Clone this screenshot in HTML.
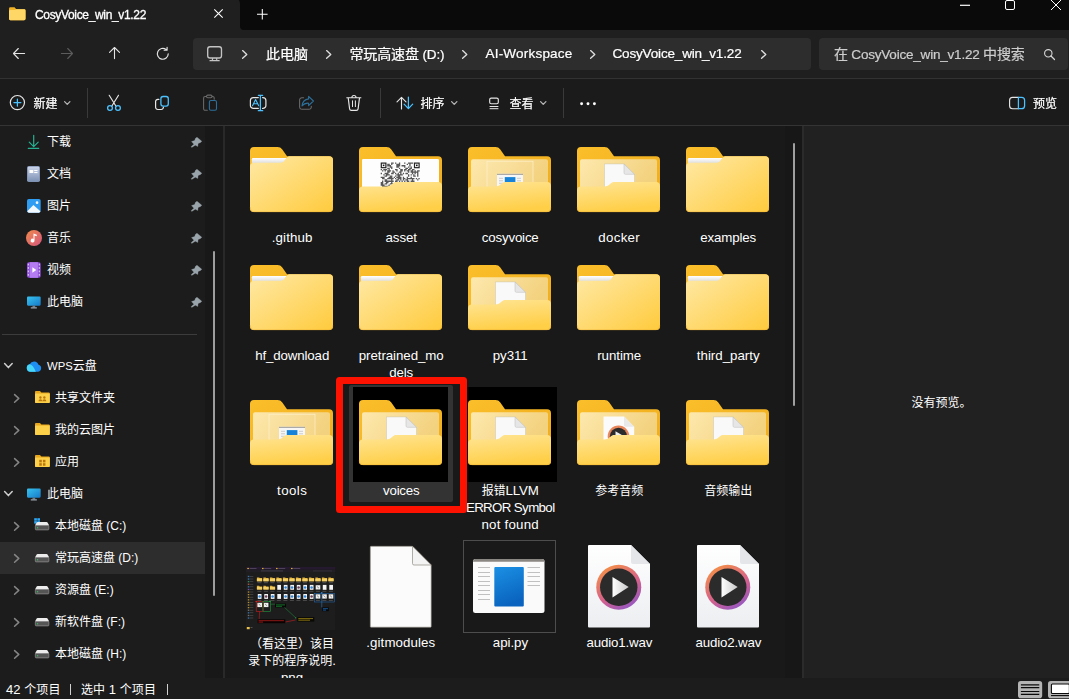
<!DOCTYPE html><html lang="zh-CN"><head><meta charset="utf-8"><title>CosyVoice_win_v1.22</title><style>
*{box-sizing:border-box;margin:0;padding:0}
html,body{width:1069px;height:699px;overflow:hidden;background:#191919;}
body{position:relative;font-family:"Liberation Sans","Noto Sans CJK SC",sans-serif;color:#fff;font-size:12px;}
.abs{position:absolute}
.t{position:absolute;white-space:nowrap;line-height:16px;height:16px;color:#fff}
.t span,.lbl span{white-space:nowrap}
svg{position:absolute;overflow:visible}
.lbl{position:absolute;width:120px;text-align:center;line-height:17px;color:#fff;white-space:nowrap}
</style></head><body>
<div class="abs" style="left:0px;top:0px;width:1069px;height:29.5px;background:#0a0a0a;"></div>
<div class="abs" style="left:0px;top:-4px;width:239.7px;height:34px;background:#1f1f1f;border-radius:0 8px 0 0"></div>
<svg style="left:239.700px;top:25.500px" width="4" height="4" viewBox="0 0 4 4"><path d="M0 0V4H4A4 4 0 0 1 0 0Z" fill="#1f1f1f"/></svg>
<div class="abs" style="left:0px;top:29.5px;width:1069px;height:48.5px;background:#1f1f1f;"></div>
<div class="abs" style="left:0px;top:77.8px;width:1069px;height:1.4px;background:#323232;"></div>
<div class="abs" style="left:0px;top:79.2px;width:1069px;height:46px;background:#1b1b1b;"></div>
<div class="abs" style="left:0px;top:125px;width:1069px;height:1px;background:#323232;"></div>
<div class="abs" style="left:0px;top:124.5px;width:1069px;height:2px;background:rgba(60,60,60,0.25);"></div>
<div class="abs" style="left:0px;top:126px;width:205px;height:552px;background:#1c1c1c;"></div>
<div class="abs" style="left:205px;top:126px;width:18px;height:552px;background:#181818;"></div>
<div class="abs" style="left:223.3px;top:126px;width:1.5px;height:552px;background:#292929;"></div>
<div class="abs" style="left:225px;top:126px;width:560px;height:552px;background:#191919;"></div>
<div class="abs" style="left:785px;top:126px;width:17.5px;height:552px;background:#171717;"></div>
<div class="abs" style="left:803.5px;top:126px;width:266px;height:552px;background:#212121;"></div>
<div class="abs" style="left:802.4px;top:126px;width:1.5px;height:552px;background:#2b2b2b;"></div>
<div class="abs" style="left:0px;top:678px;width:1069px;height:21px;background:#1c1c1c;"></div>
<svg style="left:8.700px;top:6.700px" width="16.500" height="13.500" viewBox="0 0 18 14">
<path d="M1.500 0H6l2 2h8.500A1.500 1.500 0 0 1 18 3.500V12.500A1.500 1.500 0 0 1 16.500 14H1.500A1.500 1.500 0 0 1 0 12.500V1.500A1.500 1.500 0 0 1 1.500 0Z" fill="#F2B225"/>
<path d="M0 4.200A1.200 1.200 0 0 1 1.200 3H6.500L8 2H16.500A1.500 1.500 0 0 1 18 3.500V12.500A1.500 1.500 0 0 1 16.500 14H1.500A1.500 1.500 0 0 1 0 12.500Z" fill="#FFD766"/>
</svg>
<svg style="left:214px;top:8.9px" width="9" height="9" viewBox="0 0 9 9"><path d="M0.300 0.300L8.700 8.700M8.700 0.300L0.300 8.700" stroke="#fff" stroke-width="1.1" fill="none"/></svg>
<svg style="left:257.2px;top:9.2px" width="10.600" height="10.600" viewBox="0 0 10.600 10.600"><path d="M5.300 0V10.600M0 5.300H10.600" stroke="#fff" stroke-width="1.050" fill="none"/></svg>
<svg style="left:960px;top:0px" width="10" height="10" viewBox="0 0 10 10"><path d="M0 5.300H10" stroke="#fff" stroke-width="1.2"/></svg>
<svg style="left:1005px;top:-0.500px" width="10" height="10" viewBox="0 0 10 10"><rect x="0.500" y="0.500" width="9" height="9" rx="1.500" stroke="#fff" stroke-width="1" fill="none"/></svg>
<svg style="left:1051px;top:0px" width="10" height="10" viewBox="0 0 10 10"><path d="M0 0L10 10M10 0L0 10" stroke="#fff" stroke-width="1" fill="none"/></svg>
<svg style="left:13px;top:48.0px" width="12" height="11" viewBox="0 0 12 11"><path d="M5.300 0.500L0.500 5.500L5.300 10.500M0.700 5.500H11.600" stroke="#e4e4e4" stroke-width="1.1" fill="none" stroke-linecap="round" stroke-linejoin="round"/></svg>
<svg style="left:61px;top:48.0px" width="12" height="11" viewBox="0 0 12 11"><path d="M6.700 0.500L11.500 5.500L6.700 10.500M11.300 5.500H0.400" stroke="#5c5c5c" stroke-width="1.1" fill="none" stroke-linecap="round" stroke-linejoin="round"/></svg>
<svg style="left:109.0px;top:47.4px" width="11" height="12" viewBox="0 0 11 12"><path d="M0.500 5.300L5.500 0.500L10.500 5.300M5.500 0.700V11.600" stroke="#e4e4e4" stroke-width="1.1" fill="none" stroke-linecap="round" stroke-linejoin="round"/></svg>
<svg style="left:156.2px;top:46.6px" width="13.600" height="13.600" viewBox="0 0 13 13"><path d="M11.7 6.5A5.2 5.2 0 1 1 9.6 2.300M10.600 0.300V3.100H7.800" stroke="#e4e4e4" stroke-width="1.1" fill="none" stroke-linecap="round" stroke-linejoin="round"/></svg>
<div class="abs" style="left:193px;top:38px;width:618px;height:32px;background:#2d2d2d;border-radius:4px"></div>
<div class="abs" style="left:819px;top:38px;width:249px;height:32px;background:#2d2d2d;border-radius:4px"></div>
<svg style="left:206.700px;top:45.600px" width="15.200" height="15.400" viewBox="0 0 15.200 15.400"><rect x="0.700" y="0.700" width="13.800" height="11.300" rx="2.300" stroke="#c4c4c4" stroke-width="1.350" fill="none"/><path d="M5.700 12.500L5.300 14.300M9.500 12.500L9.900 14.300M3 14.700H12.200" stroke="#c4c4c4" stroke-width="1.200" fill="none" stroke-linecap="round"/></svg>
<svg style="left:241.60000000000002px;top:49.7px" width="5.4" height="8.8" viewBox="0 0 5.4 8.8"><path d="M0.600 0.600L4.800000000000001 4.4L0.6 8.200000000000001" stroke="#dedede" stroke-width="1.35" fill="none" stroke-linecap="round" stroke-linejoin="round"/></svg>
<svg style="left:325.6px;top:49.7px" width="5.4" height="8.8" viewBox="0 0 5.4 8.8"><path d="M0.600 0.600L4.800000000000001 4.4L0.6 8.200000000000001" stroke="#dedede" stroke-width="1.35" fill="none" stroke-linecap="round" stroke-linejoin="round"/></svg>
<svg style="left:462.40000000000003px;top:49.7px" width="5.4" height="8.8" viewBox="0 0 5.4 8.8"><path d="M0.600 0.600L4.800000000000001 4.4L0.6 8.200000000000001" stroke="#dedede" stroke-width="1.35" fill="none" stroke-linecap="round" stroke-linejoin="round"/></svg>
<svg style="left:589.9px;top:49.7px" width="5.4" height="8.8" viewBox="0 0 5.4 8.8"><path d="M0.600 0.600L4.800000000000001 4.4L0.6 8.200000000000001" stroke="#dedede" stroke-width="1.35" fill="none" stroke-linecap="round" stroke-linejoin="round"/></svg>
<svg style="left:760.5999999999999px;top:49.7px" width="5.4" height="8.8" viewBox="0 0 5.4 8.8"><path d="M0.600 0.600L4.800000000000001 4.4L0.6 8.200000000000001" stroke="#dedede" stroke-width="1.35" fill="none" stroke-linecap="round" stroke-linejoin="round"/></svg>
<svg style="left:1043.500px;top:48.500px" width="11" height="11" viewBox="0 0 11 11"><circle cx="4.300" cy="4.300" r="3.700" stroke="#d8d8d8" stroke-width="1.1" fill="none"/><path d="M7 7L10.500 10.500" stroke="#d8d8d8" stroke-width="1.200" stroke-linecap="round"/></svg>
<svg style="left:0;top:0" width="1069" height="699" viewBox="0 0 1069 699" fill="none" stroke-linecap="round" stroke-linejoin="round"><circle cx="17.4" cy="102.6" r="7.1" stroke="#e6e6e6" stroke-width="1.2"/><path d="M17.4 99.1V106.1M13.9 102.6H20.9" stroke="#4cc2ff" stroke-width="1.25"/><path d="M109.2 95.3L116 106.2M118.5 95.3L111.7 106.2" stroke="#e6e6e6" stroke-width="1.15"/><circle cx="110" cy="108.05" r="2.4" stroke="#4cc2ff" stroke-width="1.3"/><circle cx="117.95" cy="108.05" r="2.4" stroke="#4cc2ff" stroke-width="1.3"/><path d="M158.9 99.4H157.8A2.2 2.2 0 0 0 155.6 101.6V107.3A2.2 2.2 0 0 0 157.8 109.5H161.2A2.2 2.2 0 0 0 163.4 107.3V107" stroke="#e6e6e6" stroke-width="1.2"/><rect x="160.9" y="96.5" width="7.4" height="9.55" rx="2.2" stroke="#4cc2ff" stroke-width="1.3"/><path d="M206.5 96.5H205.1A1.5 1.5 0 0 0 203.6 98V108.8A1.5 1.5 0 0 0 205.1 110.3H207.3M212.1 96.5H212.7A1.5 1.5 0 0 1 214.2 98V99.3" stroke="#6a6a6a" stroke-width="1.05"/><rect x="206.5" y="95.1" width="5.6" height="2.6" rx="1.3" stroke="#6a6a6a" stroke-width="1.05"/><rect x="209.4" y="100.5" width="7.1" height="9.8" rx="1.5" stroke="#2d6f99" stroke-width="1.1"/><path d="M258.3 97.6H253.4A3 3 0 0 0 250.4 100.6V105.4A3 3 0 0 0 253.4 108.4H258.3M262.6 97.6H262.9A3 3 0 0 1 265.9 100.6V105.4A3 3 0 0 1 262.9 108.4H262.6" stroke="#e6e6e6" stroke-width="1.2"/><path d="M258.3 95.3H262.7M258.3 110.7H262.7M260.4 95.3V110.7" stroke="#4cc2ff" stroke-width="1.25"/><path d="M252.5 105.8L255.6 99.5L258.7 105.8M253.5 103.8H257.7" stroke="#4cc2ff" stroke-width="1.1"/><path d="M303.6 97.7H301.9A2.3 2.3 0 0 0 299.6 100V106.9A2.3 2.3 0 0 0 301.9 109.2H309A2.3 2.3 0 0 0 311.3 106.9V106.2" stroke="#6a6a6a" stroke-width="1.05"/><path d="M308.6 96.3L313.4 101L308.6 105.6V103.2C305.8 103 303.6 104 302 106C302.4 102.2 304.8 99.3 308.6 98.9Z" stroke="#2d6f99" stroke-width="1.1"/><path d="M346.8 97.7H360.9M351.9 97.5A2.05 2.05 0 0 1 356 97.5M348.2 97.9L349.6 108.9A1.7 1.7 0 0 0 351.3 110.4H356.4A1.7 1.7 0 0 0 358.1 108.9L359.5 97.9" stroke="#e6e6e6" stroke-width="1.15"/><path d="M352.5 100.8V106.6M355.4 100.8V106.6" stroke="#e6e6e6" stroke-width="1"/><path d="M397 101.8L401.5 97.4L406 101.8M401.5 97.6V109" stroke="#e6e6e6" stroke-width="1.15"/><path d="M404.1 104.1L408.4 108.6L412.7 104.1M408.4 108.4V97" stroke="#4cc2ff" stroke-width="1.25"/><rect x="489.7" y="98.1" width="8.6" height="5.7" rx="1.5" stroke="#e6e6e6" stroke-width="1.15"/><path d="M490 106.5H498M490 108.7H498" stroke="#e6e6e6" stroke-width="1"/><circle cx="581.6" cy="103.8" r="1.45" fill="#fff"/><circle cx="588" cy="103.8" r="1.45" fill="#fff"/><circle cx="594.4" cy="103.8" r="1.45" fill="#fff"/><path d="M1018.4 97.3H1012.6A3 3 0 0 0 1009.6 100.3V105.7A3 3 0 0 0 1012.6 108.7H1018.4" stroke="#e6e6e6" stroke-width="1.15"/><path d="M1018.4 97.3V108.7M1018.4 97.3H1021.6A3 3 0 0 1 1024.6 100.3V105.7A3 3 0 0 1 1021.6 108.7H1018.4" stroke="#4cc2ff" stroke-width="1.25"/></svg>
<svg style="left:63.75px;top:101.1px" width="6.5" height="4" viewBox="0 0 6.5 4"><path d="M0.600 0.600L3.25 3.4L5.9 0.6" stroke="#b4b4b4" stroke-width="1.3" fill="none" stroke-linecap="round" stroke-linejoin="round"/></svg>
<div class="abs" style="left:87px;top:88px;width:1px;height:30px;background:#3a3a3a;"></div>
<div class="abs" style="left:379.5px;top:88px;width:1px;height:30px;background:#3a3a3a;"></div>
<svg style="left:450.65px;top:101.1px" width="6.5" height="4" viewBox="0 0 6.5 4"><path d="M0.600 0.600L3.25 3.4L5.9 0.6" stroke="#b4b4b4" stroke-width="1.3" fill="none" stroke-linecap="round" stroke-linejoin="round"/></svg>
<svg style="left:539.95px;top:101.1px" width="6.5" height="4" viewBox="0 0 6.5 4"><path d="M0.600 0.600L3.25 3.4L5.9 0.6" stroke="#b4b4b4" stroke-width="1.3" fill="none" stroke-linecap="round" stroke-linejoin="round"/></svg>
<div class="abs" style="left:562.8px;top:88px;width:1px;height:30px;background:#3a3a3a;"></div>
<svg style="left:28.000000000000004px;top:135px" width="11" height="14" viewBox="0 0 11 14"><path d="M5.700 0.300V11.500M1.200 7.200L5.700 11.700L10.200 7.200M0.300 13.400H10.700" stroke="#25b191" stroke-width="1.200" fill="none" stroke-linecap="round" stroke-linejoin="round"/></svg>
<div id="t11" class="t" style="left:47px;top:134.0px;font-size:12px;color:#fff;letter-spacing:0px;"><span style="font-size:12px">下载</span></div>
<svg style="left:191.4px;top:136.8px" width="11" height="10.600" viewBox="0 0 11 10.600"><path d="M6 0.200L10.800 4.200L9.600 5.500L7.100 6.600L6.800 9.500L4.300 8.200L0.700 10.400L0.200 9.600L2.900 7.300L0.500 4.600L3.600 3.600L4.500 1.300Z" fill="#98a3aa" stroke="#98a3aa" stroke-width="0.300" stroke-linejoin="round"/></svg>
<svg style="left:27.200000000000003px;top:166px" width="13" height="16" viewBox="0 0 13 16"><defs><linearGradient id="dg" x1="0" y1="0" x2="0" y2="1"><stop offset="0" stop-color="#c9d3e8"/><stop offset="1" stop-color="#7f93b5"/></linearGradient></defs><rect x="0" y="0" width="13" height="16" rx="1.800" fill="#8092b3"/><rect x="0.800" y="0.800" width="11.400" height="14.400" rx="1" fill="url(#dg)"/><rect x="2.500" y="4" width="3.800" height="3" fill="#fff"/><rect x="7.200" y="4" width="3.300" height="1.100" fill="#fff"/><rect x="7.200" y="6" width="3.300" height="1.100" fill="#fff"/></svg>
<div id="t12" class="t" style="left:47px;top:166.0px;font-size:12px;color:#fff;letter-spacing:0px;"><span style="font-size:12px">文档</span></div>
<svg style="left:191.4px;top:168.8px" width="11" height="10.600" viewBox="0 0 11 10.600"><path d="M6 0.200L10.800 4.200L9.600 5.500L7.100 6.600L6.800 9.500L4.300 8.200L0.700 10.400L0.200 9.600L2.900 7.300L0.500 4.600L3.600 3.600L4.500 1.300Z" fill="#98a3aa" stroke="#98a3aa" stroke-width="0.300" stroke-linejoin="round"/></svg>
<svg style="left:26.900000000000002px;top:199px" width="13.700" height="13.700" viewBox="0 0 15 15"><rect width="15" height="15" rx="2" fill="#2f9df2"/><path d="M0.300 13.500L7 6.500L14.700 13.500A2 2 0 0 1 13 15H2A2 2 0 0 1 0.300 13.500Z" fill="#f3f9ff"/><circle cx="11" cy="4" r="1.500" fill="#f3f9ff"/></svg>
<div id="t13" class="t" style="left:47px;top:198.0px;font-size:12px;color:#fff;letter-spacing:0px;"><span style="font-size:12px">图片</span></div>
<svg style="left:191.4px;top:200.8px" width="11" height="10.600" viewBox="0 0 11 10.600"><path d="M6 0.200L10.800 4.200L9.600 5.500L7.100 6.600L6.800 9.500L4.300 8.200L0.700 10.400L0.200 9.600L2.900 7.300L0.500 4.600L3.600 3.600L4.500 1.300Z" fill="#98a3aa" stroke="#98a3aa" stroke-width="0.300" stroke-linejoin="round"/></svg>
<svg style="left:25.700000000000003px;top:230px" width="16" height="16" viewBox="0 0 16 16"><defs><linearGradient id="mg" x1="0" y1="0" x2="1" y2="1"><stop offset="0" stop-color="#f08a4b"/><stop offset="1" stop-color="#d4567e"/></linearGradient></defs><circle cx="8" cy="8" r="8" fill="url(#mg)"/><path d="M7.500 3.500L10.800 4.800V6.300L8.500 5.500V10.500A1.900 1.900 0 1 1 7.500 8.900Z" fill="#fff"/></svg>
<div id="t14" class="t" style="left:47px;top:230.0px;font-size:12px;color:#fff;letter-spacing:0px;"><span style="font-size:12px">音乐</span></div>
<svg style="left:191.4px;top:232.8px" width="11" height="10.600" viewBox="0 0 11 10.600"><path d="M6 0.200L10.800 4.200L9.600 5.500L7.100 6.600L6.800 9.500L4.300 8.200L0.700 10.400L0.200 9.600L2.900 7.300L0.500 4.600L3.600 3.600L4.500 1.300Z" fill="#98a3aa" stroke="#98a3aa" stroke-width="0.300" stroke-linejoin="round"/></svg>
<svg style="left:26.900000000000002px;top:262px" width="13.700" height="16" viewBox="0 0 14 16"><rect width="14" height="16" rx="1.800" fill="#8e4fd8"/><rect x="2.800" y="0" width="8.400" height="16" fill="#b47cf0"/><path d="M5.500 5.300L9.500 8L5.500 10.700Z" fill="#fff"/><g fill="#d9c2f7"><rect x="0.800" y="1.500" width="1.200" height="1.800"/><rect x="0.800" y="5" width="1.200" height="1.800"/><rect x="0.800" y="8.500" width="1.200" height="1.800"/><rect x="0.800" y="12" width="1.200" height="1.800"/><rect x="12" y="1.500" width="1.200" height="1.800"/><rect x="12" y="5" width="1.200" height="1.800"/><rect x="12" y="8.500" width="1.200" height="1.800"/><rect x="12" y="12" width="1.200" height="1.800"/></g></svg>
<div id="t15" class="t" style="left:47px;top:262.0px;font-size:12px;color:#fff;letter-spacing:0px;"><span style="font-size:12px">视频</span></div>
<svg style="left:191.4px;top:264.8px" width="11" height="10.600" viewBox="0 0 11 10.600"><path d="M6 0.200L10.800 4.200L9.600 5.500L7.100 6.600L6.800 9.500L4.300 8.200L0.700 10.400L0.200 9.600L2.900 7.300L0.500 4.600L3.600 3.600L4.500 1.300Z" fill="#98a3aa" stroke="#98a3aa" stroke-width="0.300" stroke-linejoin="round"/></svg>
<svg style="left:26.900000000000002px;top:295.5px" width="13.700" height="13" viewBox="0 0 15 13"><defs><linearGradient id="pcg1" x1="0" y1="0" x2="1" y2="1"><stop offset="0" stop-color="#37c3f0"/><stop offset="1" stop-color="#1679c9"/></linearGradient></defs><rect width="15" height="10" rx="1.200" fill="url(#pcg1)"/><rect x="6" y="10" width="3" height="2" fill="#6f7c86"/><rect x="4" y="11.800" width="7" height="1.200" rx="0.500" fill="#9aa4ac"/></svg>
<div id="t16" class="t" style="left:47px;top:294.0px;font-size:12px;color:#fff;letter-spacing:0px;"><span style="font-size:12px">此电脑</span></div>
<svg style="left:191.4px;top:296.8px" width="11" height="10.600" viewBox="0 0 11 10.600"><path d="M6 0.200L10.800 4.200L9.600 5.500L7.100 6.600L6.800 9.500L4.300 8.200L0.700 10.400L0.200 9.600L2.900 7.300L0.500 4.600L3.600 3.600L4.500 1.300Z" fill="#98a3aa" stroke="#98a3aa" stroke-width="0.300" stroke-linejoin="round"/></svg>
<div class="abs" style="left:2px;top:334px;width:195px;height:1px;background:#3c3c3c;"></div>
<svg style="left:4.199999999999999px;top:363.4px" width="8.8" height="5.2" viewBox="0 0 8.8 5.2"><path d="M0.600 0.600L4.4 4.6000000000000005L8.200000000000001 0.6" stroke="#cfcfcf" stroke-width="1.5" fill="none" stroke-linecap="round" stroke-linejoin="round"/></svg>
<svg style="left:26px;top:359.5px" width="16" height="12" viewBox="0 0 17 12"><path d="M4.500 12A4 4 0 0 1 4 4.100A5 5 0 0 1 13.300 4.600A3.800 3.800 0 0 1 13 12Z" fill="#1f8ef1"/><path d="M4.500 12A4 4 0 0 1 4 4.100C6.500 4.500 8 7 10.500 12Z" fill="#48d6f7"/></svg>
<div id="t17" class="t" style="left:47px;top:358.0px;font-size:11.3px;color:#fff;letter-spacing:0px;">WPS<span style="font-size:12px">云盘</span></div>
<svg style="left:13.900000000000002px;top:393.6px" width="5.4" height="8.8" viewBox="0 0 5.4 8.8"><path d="M0.600 0.600L4.800000000000001 4.4L0.6 8.200000000000001" stroke="#858585" stroke-width="1.5" fill="none" stroke-linecap="round" stroke-linejoin="round"/></svg>
<svg style="left:34.5px;top:391.2px" width="14.800" height="12" viewBox="0 0 15 12"><path d="M1 0H5L6.500 1.500H14A1 1 0 0 1 15 2.500V11A1 1 0 0 1 14 12H1A1 1 0 0 1 0 11V1A1 1 0 0 1 1 0Z" fill="#e9a71b"/><path d="M0 3.300A0.800 0.800 0 0 1 0.800 2.500H15V11A1 1 0 0 1 14 12H1A1 1 0 0 1 0 11Z" fill="#fdd04a"/><circle cx="5.500" cy="6.500" r="1.200" fill="#b9770e"/><circle cx="9.500" cy="6.500" r="1.200" fill="#b9770e"/><path d="M3.500 10.200A2 2 0 0 1 7.500 10.200ZM7.500 10.200A2 2 0 0 1 11.500 10.200Z" fill="#b9770e"/></svg>
<div id="t18" class="t" style="left:55px;top:390.0px;font-size:12px;color:#fff;letter-spacing:0px;"><span style="font-size:12px">共享文件夹</span></div>
<svg style="left:13.900000000000002px;top:425.6px" width="5.4" height="8.8" viewBox="0 0 5.4 8.8"><path d="M0.600 0.600L4.800000000000001 4.4L0.6 8.200000000000001" stroke="#858585" stroke-width="1.5" fill="none" stroke-linecap="round" stroke-linejoin="round"/></svg>
<svg style="left:34.5px;top:423.2px" width="14.800" height="12" viewBox="0 0 15 12"><path d="M1 0H5L6.500 1.500H14A1 1 0 0 1 15 2.500V11A1 1 0 0 1 14 12H1A1 1 0 0 1 0 11V1A1 1 0 0 1 1 0Z" fill="#e9a71b"/><path d="M0 3.300A0.800 0.800 0 0 1 0.800 2.500H15V11A1 1 0 0 1 14 12H1A1 1 0 0 1 0 11Z" fill="#fdd04a"/></svg>
<div id="t19" class="t" style="left:55px;top:422.0px;font-size:12px;color:#fff;letter-spacing:0px;"><span style="font-size:12px">我的云图片</span></div>
<svg style="left:13.900000000000002px;top:457.6px" width="5.4" height="8.8" viewBox="0 0 5.4 8.8"><path d="M0.600 0.600L4.800000000000001 4.4L0.6 8.200000000000001" stroke="#858585" stroke-width="1.5" fill="none" stroke-linecap="round" stroke-linejoin="round"/></svg>
<svg style="left:34.5px;top:455.2px" width="14.800" height="12" viewBox="0 0 15 12"><path d="M1 0H5L6.500 1.500H14A1 1 0 0 1 15 2.500V11A1 1 0 0 1 14 12H1A1 1 0 0 1 0 11V1A1 1 0 0 1 1 0Z" fill="#e9a71b"/><path d="M0 3.300A0.800 0.800 0 0 1 0.800 2.500H15V11A1 1 0 0 1 14 12H1A1 1 0 0 1 0 11Z" fill="#fdd04a"/><g fill="#b9770e"><rect x="4.300" y="4.800" width="2.600" height="2.600"/><rect x="8" y="4.800" width="2.600" height="2.600"/><rect x="4.300" y="8.200" width="2.600" height="2.600"/><rect x="8" y="8.200" width="2.600" height="2.600"/></g></svg>
<div id="t20" class="t" style="left:55px;top:454.0px;font-size:12px;color:#fff;letter-spacing:0px;"><span style="font-size:12px">应用</span></div>
<svg style="left:4.199999999999999px;top:491.4px" width="8.8" height="5.2" viewBox="0 0 8.8 5.2"><path d="M0.600 0.600L4.4 4.6000000000000005L8.200000000000001 0.6" stroke="#cfcfcf" stroke-width="1.5" fill="none" stroke-linecap="round" stroke-linejoin="round"/></svg>
<svg style="left:26.900000000000002px;top:487.5px" width="13.700" height="13" viewBox="0 0 15 13"><defs><linearGradient id="pcg2" x1="0" y1="0" x2="1" y2="1"><stop offset="0" stop-color="#37c3f0"/><stop offset="1" stop-color="#1679c9"/></linearGradient></defs><rect width="15" height="10" rx="1.200" fill="url(#pcg2)"/><rect x="6" y="10" width="3" height="2" fill="#6f7c86"/><rect x="4" y="11.800" width="7" height="1.200" rx="0.500" fill="#9aa4ac"/></svg>
<div id="t21" class="t" style="left:47px;top:486.0px;font-size:12px;color:#fff;letter-spacing:0px;"><span style="font-size:12px">此电脑</span></div>
<div class="abs" style="left:0px;top:542px;width:204.5px;height:32px;background:#2d2d2d;"></div>
<svg style="left:13.900000000000002px;top:521.6px" width="5.4" height="8.8" viewBox="0 0 5.4 8.8"><path d="M0.600 0.600L4.800000000000001 4.4L0.6 8.200000000000001" stroke="#858585" stroke-width="1.5" fill="none" stroke-linecap="round" stroke-linejoin="round"/></svg>
<svg style="left:34.9px;top:518px" width="14.200" height="12.500" viewBox="0 0 14.200 12.500"><g fill="#2aa7f5"><rect x="-0.800" y="0.200" width="2.700" height="2.500"/><rect x="2.300" y="0.200" width="2.700" height="2.500"/><rect x="-0.800" y="3.100" width="2.700" height="2.500"/><rect x="2.300" y="3.100" width="2.700" height="2.500"/></g><path d="M2.600 4H11.600Q12.300 4 12.700 4.700L14.200 7.600H0L1.500 4.700Q1.900 4 2.600 4Z" fill="#ececec"/><rect x="0.300" y="7.500" width="13.600" height="4.400" rx="0.800" fill="#555" stroke="#a0a0a0" stroke-width="0.600"/><rect x="1.900" y="9.300" width="1.300" height="1" fill="#35d06a"/></svg>
<div id="t22" class="t" style="left:55px;top:518.0px;font-size:12px;color:#fff;letter-spacing:0px;"><span style="font-size:12px">本地磁盘</span> (C:)</div>
<svg style="left:13.900000000000002px;top:553.6px" width="5.4" height="8.8" viewBox="0 0 5.4 8.8"><path d="M0.600 0.600L4.800000000000001 4.4L0.6 8.200000000000001" stroke="#858585" stroke-width="1.5" fill="none" stroke-linecap="round" stroke-linejoin="round"/></svg>
<svg style="left:34.9px;top:550px" width="14.200" height="12.500" viewBox="0 0 14.200 12.500"><path d="M2.600 4H11.600Q12.300 4 12.700 4.700L14.200 7.600H0L1.500 4.700Q1.900 4 2.600 4Z" fill="#ececec"/><rect x="0.300" y="7.500" width="13.600" height="4.400" rx="0.800" fill="#555" stroke="#a0a0a0" stroke-width="0.600"/><rect x="1.900" y="9.300" width="1.300" height="1" fill="#35d06a"/></svg>
<div id="t23" class="t" style="left:55px;top:550.0px;font-size:12px;color:#fff;letter-spacing:0px;"><span style="font-size:12px">常玩高速盘</span> (D:)</div>
<svg style="left:13.900000000000002px;top:585.6px" width="5.4" height="8.8" viewBox="0 0 5.4 8.8"><path d="M0.600 0.600L4.800000000000001 4.4L0.6 8.200000000000001" stroke="#858585" stroke-width="1.5" fill="none" stroke-linecap="round" stroke-linejoin="round"/></svg>
<svg style="left:34.9px;top:582px" width="14.200" height="12.500" viewBox="0 0 14.200 12.500"><path d="M2.600 4H11.600Q12.300 4 12.700 4.700L14.200 7.600H0L1.500 4.700Q1.900 4 2.600 4Z" fill="#ececec"/><rect x="0.300" y="7.500" width="13.600" height="4.400" rx="0.800" fill="#555" stroke="#a0a0a0" stroke-width="0.600"/><rect x="1.900" y="9.300" width="1.300" height="1" fill="#35d06a"/></svg>
<div id="t24" class="t" style="left:55px;top:582.0px;font-size:12px;color:#fff;letter-spacing:0px;"><span style="font-size:12px">资源盘</span> (E:)</div>
<svg style="left:13.900000000000002px;top:617.6px" width="5.4" height="8.8" viewBox="0 0 5.4 8.8"><path d="M0.600 0.600L4.800000000000001 4.4L0.6 8.200000000000001" stroke="#858585" stroke-width="1.5" fill="none" stroke-linecap="round" stroke-linejoin="round"/></svg>
<svg style="left:34.9px;top:614px" width="14.200" height="12.500" viewBox="0 0 14.200 12.500"><path d="M2.600 4H11.600Q12.300 4 12.700 4.700L14.200 7.600H0L1.500 4.700Q1.900 4 2.600 4Z" fill="#ececec"/><rect x="0.300" y="7.500" width="13.600" height="4.400" rx="0.800" fill="#555" stroke="#a0a0a0" stroke-width="0.600"/><rect x="1.900" y="9.300" width="1.300" height="1" fill="#35d06a"/></svg>
<div id="t25" class="t" style="left:55px;top:614.0px;font-size:12px;color:#fff;letter-spacing:0px;"><span style="font-size:12px">新软件盘</span> (F:)</div>
<svg style="left:13.900000000000002px;top:649.6px" width="5.4" height="8.8" viewBox="0 0 5.4 8.8"><path d="M0.600 0.600L4.800000000000001 4.4L0.6 8.200000000000001" stroke="#858585" stroke-width="1.5" fill="none" stroke-linecap="round" stroke-linejoin="round"/></svg>
<svg style="left:34.9px;top:646px" width="14.200" height="12.500" viewBox="0 0 14.200 12.500"><path d="M2.600 4H11.600Q12.300 4 12.700 4.700L14.200 7.600H0L1.500 4.700Q1.900 4 2.600 4Z" fill="#ececec"/><rect x="0.300" y="7.500" width="13.600" height="4.400" rx="0.800" fill="#555" stroke="#a0a0a0" stroke-width="0.600"/><rect x="1.900" y="9.300" width="1.300" height="1" fill="#35d06a"/></svg>
<div id="t26" class="t" style="left:55px;top:646.0px;font-size:12px;color:#fff;letter-spacing:0px;"><span style="font-size:12px">本地磁盘</span> (H:)</div>
<div class="abs" style="left:212.5px;top:250.7px;width:2px;height:345px;background:#9d9d9d;border-radius:1px"></div>
<div class="abs" style="left:349px;top:385px;width:104px;height:116.7px;background:#333;border-radius:2px"></div>
<div class="abs" style="left:353px;top:387px;width:95px;height:95px;background:#000;"></div>
<div class="abs" style="left:466.5px;top:387px;width:90.5px;height:95px;background:#000;"></div>
<svg style="left:250.0px;top:146.6px" width="83" height="65.1" viewBox="0 0 83 65.5" preserveAspectRatio="none"><defs><linearGradient id="ff1" x1="0" y1="0" x2="1" y2="1"><stop offset="0" stop-color="#ffe9a6"/><stop offset="1" stop-color="#ffcb3d"/></linearGradient><linearGradient id="fb1" x1="0" y1="0" x2="1" y2="1"><stop offset="0" stop-color="#fbbf2b"/><stop offset="1" stop-color="#eeaa1a"/></linearGradient><linearGradient id="fw1" x1="0" y1="0" x2="0" y2="1"><stop offset="0" stop-color="#ffffff"/><stop offset="1" stop-color="#dedede"/></linearGradient><linearGradient id="fi1" x1="0" y1="0" x2="1" y2="0.3"><stop offset="0" stop-color="#fde8ad"/><stop offset="1" stop-color="#f3d27f"/></linearGradient><linearGradient id="fo1" x1="0" y1="0" x2="0.300" y2="1"><stop offset="0" stop-color="#ffe595"/><stop offset="1" stop-color="#ffcf48"/></linearGradient></defs><path d="M4 0H27.5C29.5 0 31 0.8 32.3 2.6L37 9.3H79A4 4 0 0 1 83 13.3V61.5A4 4 0 0 1 79 65.5H4A4 4 0 0 1 0 61.5V4A4 4 0 0 1 4 0Z" fill="url(#fb1)"/><path d="M3 11.1H37L33 16.2H1.8V12.3A1.2 1.2 0 0 1 3 11.1Z" fill="url(#fw1)"/><path d="M0 19.8A4 4 0 0 1 4 15.8H30C32 15.8 33 15.3 34 14.3L36.5 11C37.5 9.8 38.5 9.3 40 9.3H79A4 4 0 0 1 83 13.3V61.5A4 4 0 0 1 79 65.5H4A4 4 0 0 1 0 61.5Z" fill="url(#ff1)"/><path d="M0.3 60.5V61.5A3.700 3.700 0 0 0 4 65.200H79A3.700 3.700 0 0 0 82.700 61.500V60.500" fill="none" stroke="#e9a92a" stroke-width="0.600" opacity="0.700"/></svg>
<div id="t27" class="lbl" style="left:232.2px;top:229px;font-size:13.3px;letter-spacing:0.145px">.github</div>
<svg style="left:359.0px;top:146.6px" width="83" height="65.1" viewBox="0 0 83 65.5" preserveAspectRatio="none"><defs><linearGradient id="ff2" x1="0" y1="0" x2="1" y2="1"><stop offset="0" stop-color="#ffe9a6"/><stop offset="1" stop-color="#ffcb3d"/></linearGradient><linearGradient id="fb2" x1="0" y1="0" x2="1" y2="1"><stop offset="0" stop-color="#fbbf2b"/><stop offset="1" stop-color="#eeaa1a"/></linearGradient><linearGradient id="fw2" x1="0" y1="0" x2="0" y2="1"><stop offset="0" stop-color="#ffffff"/><stop offset="1" stop-color="#dedede"/></linearGradient><linearGradient id="fi2" x1="0" y1="0" x2="1" y2="0.3"><stop offset="0" stop-color="#fde8ad"/><stop offset="1" stop-color="#f3d27f"/></linearGradient><linearGradient id="fo2" x1="0" y1="0" x2="0.300" y2="1"><stop offset="0" stop-color="#ffe595"/><stop offset="1" stop-color="#ffcf48"/></linearGradient></defs><path d="M4 0H27.5C29.5 0 31 0.8 32.3 2.6L37 9.3H79A4 4 0 0 1 83 13.3V61.5A4 4 0 0 1 79 65.5H4A4 4 0 0 1 0 61.5V4A4 4 0 0 1 4 0Z" fill="url(#fb2)"/><path d="M3 14.3A2 2 0 0 1 5 12.3H78A2 2 0 0 1 80 14.3V42H3Z" fill="url(#fi2)"/><rect x="3" y="12.100" width="77" height="30" rx="1.500" fill="#fdfdfd"/><path d="M21.7 22.1h1.3v1.3h-1.3zM21.7 26.0h1.3v1.3h-1.3zM21.7 29.9h1.3v1.3h-1.3zM21.7 35.1h1.3v1.3h-1.3zM21.7 36.4h1.3v1.3h-1.3zM21.7 37.7h1.3v1.3h-1.3zM23.0 23.4h1.3v1.3h-1.3zM23.0 29.9h1.3v1.3h-1.3zM23.0 31.2h1.3v1.3h-1.3zM23.0 33.8h1.3v1.3h-1.3zM23.0 35.1h1.3v1.3h-1.3zM23.0 36.4h1.3v1.3h-1.3zM23.0 37.7h1.3v1.3h-1.3zM23.0 39.0h1.3v1.3h-1.3zM24.3 22.1h1.3v1.3h-1.3zM24.3 27.3h1.3v1.3h-1.3zM24.3 29.9h1.3v1.3h-1.3zM24.3 31.2h1.3v1.3h-1.3zM24.3 37.7h1.3v1.3h-1.3zM24.3 39.0h1.3v1.3h-1.3zM25.6 22.1h1.3v1.3h-1.3zM25.6 23.4h1.3v1.3h-1.3zM25.6 26.0h1.3v1.3h-1.3zM25.6 28.6h1.3v1.3h-1.3zM25.6 32.5h1.3v1.3h-1.3zM25.6 33.8h1.3v1.3h-1.3zM25.6 36.4h1.3v1.3h-1.3zM25.6 39.0h1.3v1.3h-1.3zM26.9 22.1h1.3v1.3h-1.3zM26.9 26.0h1.3v1.3h-1.3zM26.9 27.3h1.3v1.3h-1.3zM26.9 28.6h1.3v1.3h-1.3zM26.9 32.5h1.3v1.3h-1.3zM26.9 33.8h1.3v1.3h-1.3zM26.9 35.1h1.3v1.3h-1.3zM26.9 36.4h1.3v1.3h-1.3zM26.9 39.0h1.3v1.3h-1.3zM28.2 16.9h1.3v1.3h-1.3zM28.2 18.2h1.3v1.3h-1.3zM28.2 20.8h1.3v1.3h-1.3zM28.2 23.4h1.3v1.3h-1.3zM28.2 24.7h1.3v1.3h-1.3zM28.2 26.0h1.3v1.3h-1.3zM28.2 27.3h1.3v1.3h-1.3zM28.2 31.2h1.3v1.3h-1.3zM28.2 33.8h1.3v1.3h-1.3zM28.2 35.1h1.3v1.3h-1.3zM28.2 39.0h1.3v1.3h-1.3zM29.5 16.9h1.3v1.3h-1.3zM29.5 18.2h1.3v1.3h-1.3zM29.5 20.8h1.3v1.3h-1.3zM29.5 22.1h1.3v1.3h-1.3zM29.5 23.4h1.3v1.3h-1.3zM29.5 24.7h1.3v1.3h-1.3zM29.5 27.3h1.3v1.3h-1.3zM29.5 29.9h1.3v1.3h-1.3zM29.5 31.2h1.3v1.3h-1.3zM29.5 33.8h1.3v1.3h-1.3zM29.5 37.7h1.3v1.3h-1.3zM29.5 39.0h1.3v1.3h-1.3zM30.8 18.2h1.3v1.3h-1.3zM30.8 19.5h1.3v1.3h-1.3zM30.8 23.4h1.3v1.3h-1.3zM30.8 28.6h1.3v1.3h-1.3zM30.8 29.9h1.3v1.3h-1.3zM30.8 31.2h1.3v1.3h-1.3zM30.8 33.8h1.3v1.3h-1.3zM30.8 36.4h1.3v1.3h-1.3zM32.1 15.6h1.3v1.3h-1.3zM32.1 16.9h1.3v1.3h-1.3zM32.1 19.5h1.3v1.3h-1.3zM32.1 20.8h1.3v1.3h-1.3zM32.1 26.0h1.3v1.3h-1.3zM32.1 28.6h1.3v1.3h-1.3zM32.1 29.9h1.3v1.3h-1.3zM32.1 31.2h1.3v1.3h-1.3zM32.1 32.5h1.3v1.3h-1.3zM32.1 33.8h1.3v1.3h-1.3zM32.1 35.1h1.3v1.3h-1.3zM32.1 36.4h1.3v1.3h-1.3zM32.1 39.0h1.3v1.3h-1.3zM33.4 15.6h1.3v1.3h-1.3zM33.4 23.4h1.3v1.3h-1.3zM33.4 24.7h1.3v1.3h-1.3zM33.4 26.0h1.3v1.3h-1.3zM33.4 31.2h1.3v1.3h-1.3zM33.4 33.8h1.3v1.3h-1.3zM33.4 36.4h1.3v1.3h-1.3zM33.4 39.0h1.3v1.3h-1.3zM34.7 24.7h1.3v1.3h-1.3zM34.7 29.9h1.3v1.3h-1.3zM34.7 36.4h1.3v1.3h-1.3zM36.0 15.6h1.3v1.3h-1.3zM36.0 22.1h1.3v1.3h-1.3zM36.0 26.0h1.3v1.3h-1.3zM36.0 28.6h1.3v1.3h-1.3zM36.0 31.2h1.3v1.3h-1.3zM36.0 33.8h1.3v1.3h-1.3zM36.0 35.1h1.3v1.3h-1.3zM36.0 37.7h1.3v1.3h-1.3zM37.3 16.9h1.3v1.3h-1.3zM37.3 18.2h1.3v1.3h-1.3zM37.3 19.5h1.3v1.3h-1.3zM37.3 22.1h1.3v1.3h-1.3zM37.3 23.4h1.3v1.3h-1.3zM37.3 27.3h1.3v1.3h-1.3zM37.3 29.9h1.3v1.3h-1.3zM37.3 32.5h1.3v1.3h-1.3zM37.3 33.8h1.3v1.3h-1.3zM37.3 39.0h1.3v1.3h-1.3zM38.6 16.9h1.3v1.3h-1.3zM38.6 18.2h1.3v1.3h-1.3zM38.6 19.5h1.3v1.3h-1.3zM38.6 26.0h1.3v1.3h-1.3zM38.6 27.3h1.3v1.3h-1.3zM38.6 28.6h1.3v1.3h-1.3zM38.6 29.9h1.3v1.3h-1.3zM38.6 31.2h1.3v1.3h-1.3zM38.6 32.5h1.3v1.3h-1.3zM38.6 35.1h1.3v1.3h-1.3zM38.6 36.4h1.3v1.3h-1.3zM39.9 15.6h1.3v1.3h-1.3zM39.9 16.9h1.3v1.3h-1.3zM39.9 18.2h1.3v1.3h-1.3zM39.9 20.8h1.3v1.3h-1.3zM39.9 24.7h1.3v1.3h-1.3zM39.9 27.3h1.3v1.3h-1.3zM39.9 28.6h1.3v1.3h-1.3zM39.9 29.9h1.3v1.3h-1.3zM39.9 31.2h1.3v1.3h-1.3zM39.9 33.8h1.3v1.3h-1.3zM39.9 35.1h1.3v1.3h-1.3zM39.9 36.4h1.3v1.3h-1.3zM39.9 39.0h1.3v1.3h-1.3zM41.2 22.1h1.3v1.3h-1.3zM41.2 23.4h1.3v1.3h-1.3zM41.2 24.7h1.3v1.3h-1.3zM41.2 26.0h1.3v1.3h-1.3zM41.2 27.3h1.3v1.3h-1.3zM41.2 29.9h1.3v1.3h-1.3zM41.2 31.2h1.3v1.3h-1.3zM41.2 32.5h1.3v1.3h-1.3zM41.2 39.0h1.3v1.3h-1.3zM42.5 18.2h1.3v1.3h-1.3zM42.5 22.1h1.3v1.3h-1.3zM42.5 23.4h1.3v1.3h-1.3zM42.5 27.3h1.3v1.3h-1.3zM42.5 33.8h1.3v1.3h-1.3zM42.5 36.4h1.3v1.3h-1.3zM43.8 18.2h1.3v1.3h-1.3zM43.8 26.0h1.3v1.3h-1.3zM43.8 29.9h1.3v1.3h-1.3zM43.8 31.2h1.3v1.3h-1.3zM43.8 32.5h1.3v1.3h-1.3zM43.8 36.4h1.3v1.3h-1.3zM43.8 37.7h1.3v1.3h-1.3zM45.1 15.6h1.3v1.3h-1.3zM45.1 18.2h1.3v1.3h-1.3zM45.1 19.5h1.3v1.3h-1.3zM45.1 22.1h1.3v1.3h-1.3zM45.1 23.4h1.3v1.3h-1.3zM45.1 31.2h1.3v1.3h-1.3zM45.1 33.8h1.3v1.3h-1.3zM45.1 35.1h1.3v1.3h-1.3zM45.1 37.7h1.3v1.3h-1.3zM46.4 20.8h1.3v1.3h-1.3zM46.4 22.1h1.3v1.3h-1.3zM46.4 26.0h1.3v1.3h-1.3zM46.4 32.5h1.3v1.3h-1.3zM46.4 37.7h1.3v1.3h-1.3zM47.7 16.9h1.3v1.3h-1.3zM47.7 20.8h1.3v1.3h-1.3zM47.7 23.4h1.3v1.3h-1.3zM47.7 26.0h1.3v1.3h-1.3zM47.7 29.9h1.3v1.3h-1.3zM47.7 31.2h1.3v1.3h-1.3zM47.7 32.5h1.3v1.3h-1.3zM47.7 33.8h1.3v1.3h-1.3zM47.7 37.7h1.3v1.3h-1.3zM47.7 39.0h1.3v1.3h-1.3zM49.0 15.6h1.3v1.3h-1.3zM49.0 19.5h1.3v1.3h-1.3zM49.0 22.1h1.3v1.3h-1.3zM49.0 23.4h1.3v1.3h-1.3zM49.0 24.7h1.3v1.3h-1.3zM49.0 27.3h1.3v1.3h-1.3zM49.0 28.6h1.3v1.3h-1.3zM49.0 31.2h1.3v1.3h-1.3zM49.0 33.8h1.3v1.3h-1.3zM49.0 36.4h1.3v1.3h-1.3zM49.0 37.7h1.3v1.3h-1.3zM50.3 15.6h1.3v1.3h-1.3zM50.3 16.9h1.3v1.3h-1.3zM50.3 18.2h1.3v1.3h-1.3zM50.3 20.8h1.3v1.3h-1.3zM50.3 22.1h1.3v1.3h-1.3zM50.3 31.2h1.3v1.3h-1.3zM50.3 36.4h1.3v1.3h-1.3zM50.3 37.7h1.3v1.3h-1.3zM51.6 15.6h1.3v1.3h-1.3zM51.6 19.5h1.3v1.3h-1.3zM51.6 20.8h1.3v1.3h-1.3zM51.6 23.4h1.3v1.3h-1.3zM51.6 24.7h1.3v1.3h-1.3zM51.6 27.3h1.3v1.3h-1.3zM51.6 29.9h1.3v1.3h-1.3zM51.6 31.2h1.3v1.3h-1.3zM51.6 33.8h1.3v1.3h-1.3zM51.6 35.1h1.3v1.3h-1.3zM52.9 15.6h1.3v1.3h-1.3zM52.9 22.1h1.3v1.3h-1.3zM52.9 23.4h1.3v1.3h-1.3zM52.9 24.7h1.3v1.3h-1.3zM52.9 26.0h1.3v1.3h-1.3zM52.9 31.2h1.3v1.3h-1.3zM52.9 32.5h1.3v1.3h-1.3zM52.9 33.8h1.3v1.3h-1.3zM52.9 39.0h1.3v1.3h-1.3zM54.2 22.1h1.3v1.3h-1.3zM54.2 24.7h1.3v1.3h-1.3zM54.2 27.3h1.3v1.3h-1.3zM54.2 28.6h1.3v1.3h-1.3zM54.2 31.2h1.3v1.3h-1.3zM54.2 33.8h1.3v1.3h-1.3zM54.2 37.7h1.3v1.3h-1.3zM54.2 39.0h1.3v1.3h-1.3zM55.5 23.4h1.3v1.3h-1.3zM55.5 24.7h1.3v1.3h-1.3zM55.5 26.0h1.3v1.3h-1.3zM55.5 28.6h1.3v1.3h-1.3zM55.5 36.4h1.3v1.3h-1.3zM56.8 24.7h1.3v1.3h-1.3zM56.8 31.2h1.3v1.3h-1.3zM56.8 39.0h1.3v1.3h-1.3zM58.1 23.4h1.3v1.3h-1.3zM58.1 24.7h1.3v1.3h-1.3zM58.1 26.0h1.3v1.3h-1.3zM58.1 27.3h1.3v1.3h-1.3zM58.1 28.6h1.3v1.3h-1.3zM58.1 32.5h1.3v1.3h-1.3zM58.1 36.4h1.3v1.3h-1.3zM59.4 23.4h1.3v1.3h-1.3zM59.4 31.2h1.3v1.3h-1.3zM59.4 35.1h1.3v1.3h-1.3zM59.4 36.4h1.3v1.3h-1.3zM59.4 37.7h1.3v1.3h-1.3zM59.4 39.0h1.3v1.3h-1.3z" fill="#3a3a3a" opacity="0.850"/><rect x="22.3" y="16.200" width="4.600" height="4.600" fill="#fff" stroke="#222" stroke-width="1.200"/><rect x="23.8" y="17.700" width="1.600" height="1.600" fill="#111"/><rect x="55.5" y="16.200" width="4.600" height="4.600" fill="#fff" stroke="#222" stroke-width="1.200"/><rect x="57.0" y="17.700" width="1.600" height="1.600" fill="#111"/><path d="M0 43.8A4 4 0 0 1 4 39.8H27.5C29.5 39.8 30.5 39.3 31.5 38.6L34 36.5C35 35.7 36 35.3 37.5 35.3H79A4 4 0 0 1 83 39.3V61.5A4 4 0 0 1 79 65.5H4A4 4 0 0 1 0 61.5Z" fill="url(#fo2)"/><path d="M0.3 60.5V61.5A3.700 3.700 0 0 0 4 65.200H79A3.700 3.700 0 0 0 82.700 61.500V60.500" fill="none" stroke="#e9a92a" stroke-width="0.600" opacity="0.700"/></svg>
<div id="t28" class="lbl" style="left:341.2px;top:229px;font-size:13.3px;letter-spacing:-0.119px">asset</div>
<svg style="left:468.0px;top:146.6px" width="83" height="65.1" viewBox="0 0 83 65.5" preserveAspectRatio="none"><defs><linearGradient id="ff3" x1="0" y1="0" x2="1" y2="1"><stop offset="0" stop-color="#ffe9a6"/><stop offset="1" stop-color="#ffcb3d"/></linearGradient><linearGradient id="fb3" x1="0" y1="0" x2="1" y2="1"><stop offset="0" stop-color="#fbbf2b"/><stop offset="1" stop-color="#eeaa1a"/></linearGradient><linearGradient id="fw3" x1="0" y1="0" x2="0" y2="1"><stop offset="0" stop-color="#ffffff"/><stop offset="1" stop-color="#dedede"/></linearGradient><linearGradient id="fi3" x1="0" y1="0" x2="1" y2="0.3"><stop offset="0" stop-color="#fde8ad"/><stop offset="1" stop-color="#f3d27f"/></linearGradient><linearGradient id="fo3" x1="0" y1="0" x2="0.300" y2="1"><stop offset="0" stop-color="#ffe595"/><stop offset="1" stop-color="#ffcf48"/></linearGradient></defs><path d="M4 0H27.5C29.5 0 31 0.8 32.3 2.6L37 9.3H79A4 4 0 0 1 83 13.3V61.5A4 4 0 0 1 79 65.5H4A4 4 0 0 1 0 61.5V4A4 4 0 0 1 4 0Z" fill="url(#fb3)"/><path d="M3 14.3A2 2 0 0 1 5 12.3H78A2 2 0 0 1 80 14.3V42H3Z" fill="url(#fi3)"/><rect x="19" y="14.300" width="46" height="30" fill="rgba(255,240,200,0.12)" stroke="#fff1cc" stroke-width="0.700"/><rect x="29" y="27" width="26" height="18" rx="0.800" fill="#f6f6f6"/><rect x="29" y="27" width="26" height="1" fill="#9a9a9a"/><rect x="36.800" y="30.300" width="10.600" height="15" fill="#1683d8"/><g stroke="#b9b9b9" stroke-width="0.700"><path d="M31 31.500H35M31 34H35M31 36.500H35M49 31.500H53M49 34H53M49 36.500H53"/></g><path d="M0 43.8A4 4 0 0 1 4 39.8H27.5C29.5 39.8 30.5 39.3 31.5 38.6L34 36.5C35 35.7 36 35.3 37.5 35.3H79A4 4 0 0 1 83 39.3V61.5A4 4 0 0 1 79 65.5H4A4 4 0 0 1 0 61.5Z" fill="url(#fo3)"/><path d="M0.3 60.5V61.5A3.700 3.700 0 0 0 4 65.200H79A3.700 3.700 0 0 0 82.700 61.500V60.500" fill="none" stroke="#e9a92a" stroke-width="0.600" opacity="0.700"/></svg>
<div id="t29" class="lbl" style="left:450.2px;top:229px;font-size:13.3px;letter-spacing:-0.177px">cosyvoice</div>
<svg style="left:577.0px;top:146.6px" width="83" height="65.1" viewBox="0 0 83 65.5" preserveAspectRatio="none"><defs><linearGradient id="ff4" x1="0" y1="0" x2="1" y2="1"><stop offset="0" stop-color="#ffe9a6"/><stop offset="1" stop-color="#ffcb3d"/></linearGradient><linearGradient id="fb4" x1="0" y1="0" x2="1" y2="1"><stop offset="0" stop-color="#fbbf2b"/><stop offset="1" stop-color="#eeaa1a"/></linearGradient><linearGradient id="fw4" x1="0" y1="0" x2="0" y2="1"><stop offset="0" stop-color="#ffffff"/><stop offset="1" stop-color="#dedede"/></linearGradient><linearGradient id="fi4" x1="0" y1="0" x2="1" y2="0.3"><stop offset="0" stop-color="#fde8ad"/><stop offset="1" stop-color="#f3d27f"/></linearGradient><linearGradient id="fo4" x1="0" y1="0" x2="0.300" y2="1"><stop offset="0" stop-color="#ffe595"/><stop offset="1" stop-color="#ffcf48"/></linearGradient></defs><path d="M4 0H27.5C29.5 0 31 0.8 32.3 2.6L37 9.3H79A4 4 0 0 1 83 13.3V61.5A4 4 0 0 1 79 65.5H4A4 4 0 0 1 0 61.5V4A4 4 0 0 1 4 0Z" fill="url(#fb4)"/><path d="M3 14.3A2 2 0 0 1 5 12.3H78A2 2 0 0 1 80 14.3V42H3Z" fill="url(#fi4)"/><path d="M27.5 17H47L57.5 27.5V45H27.5Z" fill="#f9f9f9" stroke="#c9c4b4" stroke-width="0.5"/><path d="M47 17L57.5 27.5H48.5A1.5 1.5 0 0 1 47 26Z" fill="#e6e6e6" stroke="#bdbdbd" stroke-width="0.5"/><path d="M0 43.8A4 4 0 0 1 4 39.8H27.5C29.5 39.8 30.5 39.3 31.5 38.6L34 36.5C35 35.7 36 35.3 37.5 35.3H79A4 4 0 0 1 83 39.3V61.5A4 4 0 0 1 79 65.5H4A4 4 0 0 1 0 61.5Z" fill="url(#fo4)"/><path d="M0.3 60.5V61.5A3.700 3.700 0 0 0 4 65.200H79A3.700 3.700 0 0 0 82.700 61.500V60.500" fill="none" stroke="#e9a92a" stroke-width="0.600" opacity="0.700"/></svg>
<div id="t30" class="lbl" style="left:559.2px;top:229px;font-size:13.3px;letter-spacing:0.313px">docker</div>
<svg style="left:686.0px;top:146.6px" width="83" height="65.1" viewBox="0 0 83 65.5" preserveAspectRatio="none"><defs><linearGradient id="ff5" x1="0" y1="0" x2="1" y2="1"><stop offset="0" stop-color="#ffe9a6"/><stop offset="1" stop-color="#ffcb3d"/></linearGradient><linearGradient id="fb5" x1="0" y1="0" x2="1" y2="1"><stop offset="0" stop-color="#fbbf2b"/><stop offset="1" stop-color="#eeaa1a"/></linearGradient><linearGradient id="fw5" x1="0" y1="0" x2="0" y2="1"><stop offset="0" stop-color="#ffffff"/><stop offset="1" stop-color="#dedede"/></linearGradient><linearGradient id="fi5" x1="0" y1="0" x2="1" y2="0.3"><stop offset="0" stop-color="#fde8ad"/><stop offset="1" stop-color="#f3d27f"/></linearGradient><linearGradient id="fo5" x1="0" y1="0" x2="0.300" y2="1"><stop offset="0" stop-color="#ffe595"/><stop offset="1" stop-color="#ffcf48"/></linearGradient></defs><path d="M4 0H27.5C29.5 0 31 0.8 32.3 2.6L37 9.3H79A4 4 0 0 1 83 13.3V61.5A4 4 0 0 1 79 65.5H4A4 4 0 0 1 0 61.5V4A4 4 0 0 1 4 0Z" fill="url(#fb5)"/><path d="M3 11.1H37L33 16.2H1.8V12.3A1.2 1.2 0 0 1 3 11.1Z" fill="url(#fw5)"/><path d="M0 19.8A4 4 0 0 1 4 15.8H30C32 15.8 33 15.3 34 14.3L36.5 11C37.5 9.8 38.5 9.3 40 9.3H79A4 4 0 0 1 83 13.3V61.5A4 4 0 0 1 79 65.5H4A4 4 0 0 1 0 61.5Z" fill="url(#ff5)"/><path d="M0.3 60.5V61.5A3.700 3.700 0 0 0 4 65.200H79A3.700 3.700 0 0 0 82.700 61.500V60.500" fill="none" stroke="#e9a92a" stroke-width="0.600" opacity="0.700"/></svg>
<div id="t31" class="lbl" style="left:668.2px;top:229px;font-size:13.3px;letter-spacing:-0.128px">examples</div>
<svg style="left:250.0px;top:264.5px" width="83" height="65.1" viewBox="0 0 83 65.5" preserveAspectRatio="none"><defs><linearGradient id="ff6" x1="0" y1="0" x2="1" y2="1"><stop offset="0" stop-color="#ffe9a6"/><stop offset="1" stop-color="#ffcb3d"/></linearGradient><linearGradient id="fb6" x1="0" y1="0" x2="1" y2="1"><stop offset="0" stop-color="#fbbf2b"/><stop offset="1" stop-color="#eeaa1a"/></linearGradient><linearGradient id="fw6" x1="0" y1="0" x2="0" y2="1"><stop offset="0" stop-color="#ffffff"/><stop offset="1" stop-color="#dedede"/></linearGradient><linearGradient id="fi6" x1="0" y1="0" x2="1" y2="0.3"><stop offset="0" stop-color="#fde8ad"/><stop offset="1" stop-color="#f3d27f"/></linearGradient><linearGradient id="fo6" x1="0" y1="0" x2="0.300" y2="1"><stop offset="0" stop-color="#ffe595"/><stop offset="1" stop-color="#ffcf48"/></linearGradient></defs><path d="M4 0H27.5C29.5 0 31 0.8 32.3 2.6L37 9.3H79A4 4 0 0 1 83 13.3V61.5A4 4 0 0 1 79 65.5H4A4 4 0 0 1 0 61.5V4A4 4 0 0 1 4 0Z" fill="url(#fb6)"/><path d="M3 11.1H37L33 16.2H1.8V12.3A1.2 1.2 0 0 1 3 11.1Z" fill="url(#fw6)"/><path d="M0 19.8A4 4 0 0 1 4 15.8H30C32 15.8 33 15.3 34 14.3L36.5 11C37.5 9.8 38.5 9.3 40 9.3H79A4 4 0 0 1 83 13.3V61.5A4 4 0 0 1 79 65.5H4A4 4 0 0 1 0 61.5Z" fill="url(#ff6)"/><path d="M0.3 60.5V61.5A3.700 3.700 0 0 0 4 65.200H79A3.700 3.700 0 0 0 82.700 61.500V60.500" fill="none" stroke="#e9a92a" stroke-width="0.600" opacity="0.700"/></svg>
<div id="t32" class="lbl" style="left:232.2px;top:347px;font-size:13.3px;letter-spacing:-0.134px">hf_download</div>
<svg style="left:359.0px;top:264.5px" width="83" height="65.1" viewBox="0 0 83 65.5" preserveAspectRatio="none"><defs><linearGradient id="ff7" x1="0" y1="0" x2="1" y2="1"><stop offset="0" stop-color="#ffe9a6"/><stop offset="1" stop-color="#ffcb3d"/></linearGradient><linearGradient id="fb7" x1="0" y1="0" x2="1" y2="1"><stop offset="0" stop-color="#fbbf2b"/><stop offset="1" stop-color="#eeaa1a"/></linearGradient><linearGradient id="fw7" x1="0" y1="0" x2="0" y2="1"><stop offset="0" stop-color="#ffffff"/><stop offset="1" stop-color="#dedede"/></linearGradient><linearGradient id="fi7" x1="0" y1="0" x2="1" y2="0.3"><stop offset="0" stop-color="#fde8ad"/><stop offset="1" stop-color="#f3d27f"/></linearGradient><linearGradient id="fo7" x1="0" y1="0" x2="0.300" y2="1"><stop offset="0" stop-color="#ffe595"/><stop offset="1" stop-color="#ffcf48"/></linearGradient></defs><path d="M4 0H27.5C29.5 0 31 0.8 32.3 2.6L37 9.3H79A4 4 0 0 1 83 13.3V61.5A4 4 0 0 1 79 65.5H4A4 4 0 0 1 0 61.5V4A4 4 0 0 1 4 0Z" fill="url(#fb7)"/><path d="M3 11.1H37L33 16.2H1.8V12.3A1.2 1.2 0 0 1 3 11.1Z" fill="url(#fw7)"/><path d="M0 19.8A4 4 0 0 1 4 15.8H30C32 15.8 33 15.3 34 14.3L36.5 11C37.5 9.8 38.5 9.3 40 9.3H79A4 4 0 0 1 83 13.3V61.5A4 4 0 0 1 79 65.5H4A4 4 0 0 1 0 61.5Z" fill="url(#ff7)"/><path d="M0.3 60.5V61.5A3.700 3.700 0 0 0 4 65.200H79A3.700 3.700 0 0 0 82.700 61.500V60.500" fill="none" stroke="#e9a92a" stroke-width="0.600" opacity="0.700"/></svg>
<div id="t33" class="lbl" style="left:341.2px;top:347px;font-size:13.3px;letter-spacing:-0.065px">pretrained_mo</div>
<div id="t34" class="lbl" style="left:341.2px;top:364px;font-size:13.3px;letter-spacing:-0.177px">dels</div>
<svg style="left:468.0px;top:264.5px" width="83" height="65.1" viewBox="0 0 83 65.5" preserveAspectRatio="none"><defs><linearGradient id="ff8" x1="0" y1="0" x2="1" y2="1"><stop offset="0" stop-color="#ffe9a6"/><stop offset="1" stop-color="#ffcb3d"/></linearGradient><linearGradient id="fb8" x1="0" y1="0" x2="1" y2="1"><stop offset="0" stop-color="#fbbf2b"/><stop offset="1" stop-color="#eeaa1a"/></linearGradient><linearGradient id="fw8" x1="0" y1="0" x2="0" y2="1"><stop offset="0" stop-color="#ffffff"/><stop offset="1" stop-color="#dedede"/></linearGradient><linearGradient id="fi8" x1="0" y1="0" x2="1" y2="0.3"><stop offset="0" stop-color="#fde8ad"/><stop offset="1" stop-color="#f3d27f"/></linearGradient><linearGradient id="fo8" x1="0" y1="0" x2="0.300" y2="1"><stop offset="0" stop-color="#ffe595"/><stop offset="1" stop-color="#ffcf48"/></linearGradient></defs><path d="M4 0H27.5C29.5 0 31 0.8 32.3 2.6L37 9.3H79A4 4 0 0 1 83 13.3V61.5A4 4 0 0 1 79 65.5H4A4 4 0 0 1 0 61.5V4A4 4 0 0 1 4 0Z" fill="url(#fb8)"/><path d="M3 14.3A2 2 0 0 1 5 12.3H78A2 2 0 0 1 80 14.3V42H3Z" fill="url(#fi8)"/><path d="M27.5 17H47L57.5 27.5V45H27.5Z" fill="#f9f9f9" stroke="#c9c4b4" stroke-width="0.5"/><path d="M47 17L57.5 27.5H48.5A1.5 1.5 0 0 1 47 26Z" fill="#e6e6e6" stroke="#bdbdbd" stroke-width="0.5"/><path d="M0 43.8A4 4 0 0 1 4 39.8H27.5C29.5 39.8 30.5 39.3 31.5 38.6L34 36.5C35 35.7 36 35.3 37.5 35.3H79A4 4 0 0 1 83 39.3V61.5A4 4 0 0 1 79 65.5H4A4 4 0 0 1 0 61.5Z" fill="url(#fo8)"/><path d="M0.3 60.5V61.5A3.700 3.700 0 0 0 4 65.200H79A3.700 3.700 0 0 0 82.700 61.500V60.500" fill="none" stroke="#e9a92a" stroke-width="0.600" opacity="0.700"/></svg>
<div id="t35" class="lbl" style="left:450.2px;top:347px;font-size:13.3px;letter-spacing:-0.11px">py311</div>
<svg style="left:577.0px;top:264.5px" width="83" height="65.1" viewBox="0 0 83 65.5" preserveAspectRatio="none"><defs><linearGradient id="ff9" x1="0" y1="0" x2="1" y2="1"><stop offset="0" stop-color="#ffe9a6"/><stop offset="1" stop-color="#ffcb3d"/></linearGradient><linearGradient id="fb9" x1="0" y1="0" x2="1" y2="1"><stop offset="0" stop-color="#fbbf2b"/><stop offset="1" stop-color="#eeaa1a"/></linearGradient><linearGradient id="fw9" x1="0" y1="0" x2="0" y2="1"><stop offset="0" stop-color="#ffffff"/><stop offset="1" stop-color="#dedede"/></linearGradient><linearGradient id="fi9" x1="0" y1="0" x2="1" y2="0.3"><stop offset="0" stop-color="#fde8ad"/><stop offset="1" stop-color="#f3d27f"/></linearGradient><linearGradient id="fo9" x1="0" y1="0" x2="0.300" y2="1"><stop offset="0" stop-color="#ffe595"/><stop offset="1" stop-color="#ffcf48"/></linearGradient></defs><path d="M4 0H27.5C29.5 0 31 0.8 32.3 2.6L37 9.3H79A4 4 0 0 1 83 13.3V61.5A4 4 0 0 1 79 65.5H4A4 4 0 0 1 0 61.5V4A4 4 0 0 1 4 0Z" fill="url(#fb9)"/><path d="M3 11.1H37L33 16.2H1.8V12.3A1.2 1.2 0 0 1 3 11.1Z" fill="url(#fw9)"/><path d="M0 19.8A4 4 0 0 1 4 15.8H30C32 15.8 33 15.3 34 14.3L36.5 11C37.5 9.8 38.5 9.3 40 9.3H79A4 4 0 0 1 83 13.3V61.5A4 4 0 0 1 79 65.5H4A4 4 0 0 1 0 61.5Z" fill="url(#ff9)"/><path d="M0.3 60.5V61.5A3.700 3.700 0 0 0 4 65.200H79A3.700 3.700 0 0 0 82.700 61.500V60.500" fill="none" stroke="#e9a92a" stroke-width="0.600" opacity="0.700"/></svg>
<div id="t36" class="lbl" style="left:559.2px;top:347px;font-size:13.3px;letter-spacing:-0.049px">runtime</div>
<svg style="left:686.0px;top:264.5px" width="83" height="65.1" viewBox="0 0 83 65.5" preserveAspectRatio="none"><defs><linearGradient id="ff10" x1="0" y1="0" x2="1" y2="1"><stop offset="0" stop-color="#ffe9a6"/><stop offset="1" stop-color="#ffcb3d"/></linearGradient><linearGradient id="fb10" x1="0" y1="0" x2="1" y2="1"><stop offset="0" stop-color="#fbbf2b"/><stop offset="1" stop-color="#eeaa1a"/></linearGradient><linearGradient id="fw10" x1="0" y1="0" x2="0" y2="1"><stop offset="0" stop-color="#ffffff"/><stop offset="1" stop-color="#dedede"/></linearGradient><linearGradient id="fi10" x1="0" y1="0" x2="1" y2="0.3"><stop offset="0" stop-color="#fde8ad"/><stop offset="1" stop-color="#f3d27f"/></linearGradient><linearGradient id="fo10" x1="0" y1="0" x2="0.300" y2="1"><stop offset="0" stop-color="#ffe595"/><stop offset="1" stop-color="#ffcf48"/></linearGradient></defs><path d="M4 0H27.5C29.5 0 31 0.8 32.3 2.6L37 9.3H79A4 4 0 0 1 83 13.3V61.5A4 4 0 0 1 79 65.5H4A4 4 0 0 1 0 61.5V4A4 4 0 0 1 4 0Z" fill="url(#fb10)"/><path d="M3 11.1H37L33 16.2H1.8V12.3A1.2 1.2 0 0 1 3 11.1Z" fill="url(#fw10)"/><path d="M0 19.8A4 4 0 0 1 4 15.8H30C32 15.8 33 15.3 34 14.3L36.5 11C37.5 9.8 38.5 9.3 40 9.3H79A4 4 0 0 1 83 13.3V61.5A4 4 0 0 1 79 65.5H4A4 4 0 0 1 0 61.5Z" fill="url(#ff10)"/><path d="M0.3 60.5V61.5A3.700 3.700 0 0 0 4 65.200H79A3.700 3.700 0 0 0 82.700 61.500V60.500" fill="none" stroke="#e9a92a" stroke-width="0.600" opacity="0.700"/></svg>
<div id="t37" class="lbl" style="left:668.2px;top:347px;font-size:13.3px;letter-spacing:-0.012px">third_party</div>
<svg style="left:250.0px;top:399.5px" width="83" height="65.1" viewBox="0 0 83 65.5" preserveAspectRatio="none"><defs><linearGradient id="ff11" x1="0" y1="0" x2="1" y2="1"><stop offset="0" stop-color="#ffe9a6"/><stop offset="1" stop-color="#ffcb3d"/></linearGradient><linearGradient id="fb11" x1="0" y1="0" x2="1" y2="1"><stop offset="0" stop-color="#fbbf2b"/><stop offset="1" stop-color="#eeaa1a"/></linearGradient><linearGradient id="fw11" x1="0" y1="0" x2="0" y2="1"><stop offset="0" stop-color="#ffffff"/><stop offset="1" stop-color="#dedede"/></linearGradient><linearGradient id="fi11" x1="0" y1="0" x2="1" y2="0.3"><stop offset="0" stop-color="#fde8ad"/><stop offset="1" stop-color="#f3d27f"/></linearGradient><linearGradient id="fo11" x1="0" y1="0" x2="0.300" y2="1"><stop offset="0" stop-color="#ffe595"/><stop offset="1" stop-color="#ffcf48"/></linearGradient></defs><path d="M4 0H27.5C29.5 0 31 0.8 32.3 2.6L37 9.3H79A4 4 0 0 1 83 13.3V61.5A4 4 0 0 1 79 65.5H4A4 4 0 0 1 0 61.5V4A4 4 0 0 1 4 0Z" fill="url(#fb11)"/><path d="M3 14.3A2 2 0 0 1 5 12.3H78A2 2 0 0 1 80 14.3V42H3Z" fill="url(#fi11)"/><rect x="19" y="14.300" width="46" height="30" fill="rgba(255,240,200,0.12)" stroke="#fff1cc" stroke-width="0.700"/><rect x="29" y="27" width="26" height="18" rx="0.800" fill="#f6f6f6"/><rect x="29" y="27" width="26" height="1" fill="#9a9a9a"/><rect x="36.800" y="30.300" width="10.600" height="15" fill="#1683d8"/><g stroke="#b9b9b9" stroke-width="0.700"><path d="M31 31.500H35M31 34H35M31 36.500H35M49 31.500H53M49 34H53M49 36.500H53"/></g><path d="M0 43.8A4 4 0 0 1 4 39.8H27.5C29.5 39.8 30.5 39.3 31.5 38.6L34 36.5C35 35.7 36 35.3 37.5 35.3H79A4 4 0 0 1 83 39.3V61.5A4 4 0 0 1 79 65.5H4A4 4 0 0 1 0 61.5Z" fill="url(#fo11)"/><path d="M0.3 60.5V61.5A3.700 3.700 0 0 0 4 65.200H79A3.700 3.700 0 0 0 82.700 61.500V60.500" fill="none" stroke="#e9a92a" stroke-width="0.600" opacity="0.700"/></svg>
<div id="t38" class="lbl" style="left:232.2px;top:481.5px;font-size:13.3px;letter-spacing:0.421px">tools</div>
<svg style="left:359.0px;top:399.5px" width="83" height="65.1" viewBox="0 0 83 65.5" preserveAspectRatio="none"><defs><linearGradient id="ff12" x1="0" y1="0" x2="1" y2="1"><stop offset="0" stop-color="#ffe9a6"/><stop offset="1" stop-color="#ffcb3d"/></linearGradient><linearGradient id="fb12" x1="0" y1="0" x2="1" y2="1"><stop offset="0" stop-color="#fbbf2b"/><stop offset="1" stop-color="#eeaa1a"/></linearGradient><linearGradient id="fw12" x1="0" y1="0" x2="0" y2="1"><stop offset="0" stop-color="#ffffff"/><stop offset="1" stop-color="#dedede"/></linearGradient><linearGradient id="fi12" x1="0" y1="0" x2="1" y2="0.3"><stop offset="0" stop-color="#fde8ad"/><stop offset="1" stop-color="#f3d27f"/></linearGradient><linearGradient id="fo12" x1="0" y1="0" x2="0.300" y2="1"><stop offset="0" stop-color="#ffe595"/><stop offset="1" stop-color="#ffcf48"/></linearGradient></defs><path d="M4 0H27.5C29.5 0 31 0.8 32.3 2.6L37 9.3H79A4 4 0 0 1 83 13.3V61.5A4 4 0 0 1 79 65.5H4A4 4 0 0 1 0 61.5V4A4 4 0 0 1 4 0Z" fill="url(#fb12)"/><path d="M3 14.3A2 2 0 0 1 5 12.3H78A2 2 0 0 1 80 14.3V42H3Z" fill="url(#fi12)"/><path d="M27.5 17H47L57.5 27.5V45H27.5Z" fill="#f9f9f9" stroke="#c9c4b4" stroke-width="0.5"/><path d="M47 17L57.5 27.5H48.5A1.5 1.5 0 0 1 47 26Z" fill="#e6e6e6" stroke="#bdbdbd" stroke-width="0.5"/><path d="M0 43.8A4 4 0 0 1 4 39.8H27.5C29.5 39.8 30.5 39.3 31.5 38.6L34 36.5C35 35.7 36 35.3 37.5 35.3H79A4 4 0 0 1 83 39.3V61.5A4 4 0 0 1 79 65.5H4A4 4 0 0 1 0 61.5Z" fill="url(#fo12)"/><path d="M0.3 60.5V61.5A3.700 3.700 0 0 0 4 65.200H79A3.700 3.700 0 0 0 82.700 61.500V60.500" fill="none" stroke="#e9a92a" stroke-width="0.600" opacity="0.700"/></svg>
<div id="t39" class="lbl" style="left:341.2px;top:481.5px;font-size:13.3px;letter-spacing:-0.251px">voices</div>
<svg style="left:468.0px;top:399.5px" width="83" height="65.1" viewBox="0 0 83 65.5" preserveAspectRatio="none"><defs><linearGradient id="ff13" x1="0" y1="0" x2="1" y2="1"><stop offset="0" stop-color="#ffe9a6"/><stop offset="1" stop-color="#ffcb3d"/></linearGradient><linearGradient id="fb13" x1="0" y1="0" x2="1" y2="1"><stop offset="0" stop-color="#fbbf2b"/><stop offset="1" stop-color="#eeaa1a"/></linearGradient><linearGradient id="fw13" x1="0" y1="0" x2="0" y2="1"><stop offset="0" stop-color="#ffffff"/><stop offset="1" stop-color="#dedede"/></linearGradient><linearGradient id="fi13" x1="0" y1="0" x2="1" y2="0.3"><stop offset="0" stop-color="#fde8ad"/><stop offset="1" stop-color="#f3d27f"/></linearGradient><linearGradient id="fo13" x1="0" y1="0" x2="0.300" y2="1"><stop offset="0" stop-color="#ffe595"/><stop offset="1" stop-color="#ffcf48"/></linearGradient></defs><path d="M4 0H27.5C29.5 0 31 0.8 32.3 2.6L37 9.3H79A4 4 0 0 1 83 13.3V61.5A4 4 0 0 1 79 65.5H4A4 4 0 0 1 0 61.5V4A4 4 0 0 1 4 0Z" fill="url(#fb13)"/><path d="M3 14.3A2 2 0 0 1 5 12.3H78A2 2 0 0 1 80 14.3V42H3Z" fill="url(#fi13)"/><path d="M27.5 17H47L57.5 27.5V45H27.5Z" fill="#f9f9f9" stroke="#c9c4b4" stroke-width="0.5"/><path d="M47 17L57.5 27.5H48.5A1.5 1.5 0 0 1 47 26Z" fill="#e6e6e6" stroke="#bdbdbd" stroke-width="0.5"/><path d="M0 43.8A4 4 0 0 1 4 39.8H27.5C29.5 39.8 30.5 39.3 31.5 38.6L34 36.5C35 35.7 36 35.3 37.5 35.3H79A4 4 0 0 1 83 39.3V61.5A4 4 0 0 1 79 65.5H4A4 4 0 0 1 0 61.5Z" fill="url(#fo13)"/><path d="M0.3 60.5V61.5A3.700 3.700 0 0 0 4 65.200H79A3.700 3.700 0 0 0 82.700 61.500V60.500" fill="none" stroke="#e9a92a" stroke-width="0.600" opacity="0.700"/></svg>
<div id="t40" class="lbl" style="left:450.2px;top:481.5px;font-size:13.3px;letter-spacing:-0.161px"><span style="font-size:12px">报错</span>LLVM</div>
<div id="t41" class="lbl" style="left:450.2px;top:498.5px;font-size:13.3px;letter-spacing:-0.622px">ERROR Symbol</div>
<div id="t42" class="lbl" style="left:450.2px;top:515.5px;font-size:13.3px;letter-spacing:0.215px">not found</div>
<svg style="left:577.0px;top:399.5px" width="83" height="65.1" viewBox="0 0 83 65.5" preserveAspectRatio="none"><defs><linearGradient id="ff14" x1="0" y1="0" x2="1" y2="1"><stop offset="0" stop-color="#ffe9a6"/><stop offset="1" stop-color="#ffcb3d"/></linearGradient><linearGradient id="fb14" x1="0" y1="0" x2="1" y2="1"><stop offset="0" stop-color="#fbbf2b"/><stop offset="1" stop-color="#eeaa1a"/></linearGradient><linearGradient id="fw14" x1="0" y1="0" x2="0" y2="1"><stop offset="0" stop-color="#ffffff"/><stop offset="1" stop-color="#dedede"/></linearGradient><linearGradient id="fi14" x1="0" y1="0" x2="1" y2="0.3"><stop offset="0" stop-color="#fde8ad"/><stop offset="1" stop-color="#f3d27f"/></linearGradient><linearGradient id="fo14" x1="0" y1="0" x2="0.300" y2="1"><stop offset="0" stop-color="#ffe595"/><stop offset="1" stop-color="#ffcf48"/></linearGradient></defs><path d="M4 0H27.5C29.5 0 31 0.8 32.3 2.6L37 9.3H79A4 4 0 0 1 83 13.3V61.5A4 4 0 0 1 79 65.5H4A4 4 0 0 1 0 61.5V4A4 4 0 0 1 4 0Z" fill="url(#fb14)"/><path d="M3 14.3A2 2 0 0 1 5 12.3H78A2 2 0 0 1 80 14.3V42H3Z" fill="url(#fi14)"/><path d="M26.5 16.7H47L57.2 27V45H26.5Z" fill="#fbfbfb"/><path d="M47 16.700L57.2 27H48.5A1.5 1.5 0 0 1 47 25.5Z" fill="#e9e9e9"/><circle cx="41.5" cy="36.5" r="10.8" fill="#e8875c"/><circle cx="41.5" cy="36.5" r="8.6" fill="#2b2b2b"/><path d="M38.5 31.5L47 36.5L38.5 41.5Z" fill="#eee"/><path d="M0 43.8A4 4 0 0 1 4 39.8H27.5C29.5 39.8 30.5 39.3 31.5 38.6L34 36.5C35 35.7 36 35.3 37.5 35.3H79A4 4 0 0 1 83 39.3V61.5A4 4 0 0 1 79 65.5H4A4 4 0 0 1 0 61.5Z" fill="url(#fo14)"/><path d="M0.3 60.5V61.5A3.700 3.700 0 0 0 4 65.200H79A3.700 3.700 0 0 0 82.700 61.500V60.500" fill="none" stroke="#e9a92a" stroke-width="0.600" opacity="0.700"/></svg>
<div id="t43" class="lbl" style="left:559.2px;top:481.5px;font-size:13.3px;letter-spacing:0px"><span style="font-size:12px">参考音频</span></div>
<svg style="left:686.0px;top:399.5px" width="83" height="65.1" viewBox="0 0 83 65.5" preserveAspectRatio="none"><defs><linearGradient id="ff15" x1="0" y1="0" x2="1" y2="1"><stop offset="0" stop-color="#ffe9a6"/><stop offset="1" stop-color="#ffcb3d"/></linearGradient><linearGradient id="fb15" x1="0" y1="0" x2="1" y2="1"><stop offset="0" stop-color="#fbbf2b"/><stop offset="1" stop-color="#eeaa1a"/></linearGradient><linearGradient id="fw15" x1="0" y1="0" x2="0" y2="1"><stop offset="0" stop-color="#ffffff"/><stop offset="1" stop-color="#dedede"/></linearGradient><linearGradient id="fi15" x1="0" y1="0" x2="1" y2="0.3"><stop offset="0" stop-color="#fde8ad"/><stop offset="1" stop-color="#f3d27f"/></linearGradient><linearGradient id="fo15" x1="0" y1="0" x2="0.300" y2="1"><stop offset="0" stop-color="#ffe595"/><stop offset="1" stop-color="#ffcf48"/></linearGradient></defs><path d="M4 0H27.5C29.5 0 31 0.8 32.3 2.6L37 9.3H79A4 4 0 0 1 83 13.3V61.5A4 4 0 0 1 79 65.5H4A4 4 0 0 1 0 61.5V4A4 4 0 0 1 4 0Z" fill="url(#fb15)"/><path d="M3 14.3A2 2 0 0 1 5 12.3H78A2 2 0 0 1 80 14.3V42H3Z" fill="url(#fi15)"/><path d="M27.5 17H47L57.5 27.5V45H27.5Z" fill="#f9f9f9" stroke="#c9c4b4" stroke-width="0.5"/><path d="M47 17L57.5 27.5H48.5A1.5 1.5 0 0 1 47 26Z" fill="#e6e6e6" stroke="#bdbdbd" stroke-width="0.5"/><path d="M0 43.8A4 4 0 0 1 4 39.8H27.5C29.5 39.8 30.5 39.3 31.5 38.6L34 36.5C35 35.7 36 35.3 37.5 35.3H79A4 4 0 0 1 83 39.3V61.5A4 4 0 0 1 79 65.5H4A4 4 0 0 1 0 61.5Z" fill="url(#fo15)"/><path d="M0.3 60.5V61.5A3.700 3.700 0 0 0 4 65.200H79A3.700 3.700 0 0 0 82.700 61.500V60.500" fill="none" stroke="#e9a92a" stroke-width="0.600" opacity="0.700"/></svg>
<div id="t44" class="lbl" style="left:668.2px;top:481.5px;font-size:13.3px;letter-spacing:0px"><span style="font-size:12px">音频输出</span></div>
<div class="abs" style="left:336.400px;top:377.100px;width:130.200px;height:136.200px;border:7.400px solid #fd1100;border-radius:3.500px"></div>
<svg style="left:246.3px;top:567px" width="89.2" height="63.3" viewBox="0 0 89.200 63.300"><rect width="89.200" height="63.300" fill="#1d1d1e"/><rect width="89.200" height="2.700" fill="#25192f"/><rect y="2.700" width="89.200" height="2.400" fill="#211e26"/><rect x="15" y="3.100" width="22" height="1.600" fill="#34313a"/><rect x="67" y="3.100" width="19" height="1.600" fill="#2c2931"/><rect x="1.3" y="0.900" width="1.600" height="1.200" fill="#d9ad34"/><rect x="3.5" y="1.200" width="7" height="0.600" fill="#6a5d7a"/><rect x="16" y="0.900" width="1.600" height="1.200" fill="#d9ad34"/><rect x="18.2" y="1.200" width="7" height="0.600" fill="#6a5d7a"/><rect x="30" y="0.900" width="1.600" height="1.200" fill="#d9ad34"/><rect x="32.2" y="1.200" width="7" height="0.600" fill="#6a5d7a"/><rect x="45" y="0.900" width="1.600" height="1.200" fill="#d9ad34"/><rect x="47.2" y="1.200" width="7" height="0.600" fill="#6a5d7a"/><rect x="1.800" y="8.8" width="1.500" height="1.300" fill="#3b8ed8" opacity="0.800"/><rect x="3.800" y="9.1" width="3.500" height="0.600" fill="#555"/><rect x="1.800" y="11.4" width="1.500" height="1.300" fill="#3b8ed8" opacity="0.800"/><rect x="3.800" y="11.7" width="3.500" height="0.600" fill="#555"/><rect x="1.800" y="14.0" width="1.500" height="1.300" fill="#39a86b" opacity="0.800"/><rect x="3.800" y="14.3" width="3.500" height="0.600" fill="#555"/><rect x="1.800" y="16.6" width="1.500" height="1.300" fill="#d8694a" opacity="0.800"/><rect x="3.800" y="16.9" width="3.500" height="0.600" fill="#555"/><rect x="1.800" y="19.2" width="1.500" height="1.300" fill="#3b8ed8" opacity="0.800"/><rect x="3.800" y="19.5" width="3.500" height="0.600" fill="#555"/><rect x="1.800" y="21.8" width="1.500" height="1.300" fill="#8a5bd1" opacity="0.800"/><rect x="3.800" y="22.1" width="3.500" height="0.600" fill="#555"/><rect x="1.800" y="24.4" width="1.500" height="1.300" fill="#d9ad34" opacity="0.800"/><rect x="3.800" y="24.7" width="3.500" height="0.600" fill="#555"/><rect x="1.800" y="27.0" width="1.500" height="1.300" fill="#d9ad34" opacity="0.800"/><rect x="3.800" y="27.3" width="3.500" height="0.600" fill="#555"/><rect x="1.800" y="29.6" width="1.500" height="1.300" fill="#d9ad34" opacity="0.800"/><rect x="3.800" y="29.9" width="3.500" height="0.600" fill="#555"/><rect x="1.800" y="32.2" width="1.500" height="1.300" fill="#d9ad34" opacity="0.800"/><rect x="3.800" y="32.5" width="3.500" height="0.600" fill="#555"/><rect x="1.800" y="34.8" width="1.500" height="1.300" fill="#d9ad34" opacity="0.800"/><rect x="3.800" y="35.1" width="3.500" height="0.600" fill="#555"/><rect x="1.800" y="37.4" width="1.500" height="1.300" fill="#d9ad34" opacity="0.800"/><rect x="3.800" y="37.7" width="3.500" height="0.600" fill="#555"/><rect x="1.800" y="40.0" width="1.500" height="1.300" fill="#d9ad34" opacity="0.800"/><rect x="3.800" y="40.3" width="3.500" height="0.600" fill="#555"/><rect x="1.800" y="42.6" width="1.500" height="1.300" fill="#8a8a8a" opacity="0.800"/><rect x="3.800" y="42.9" width="3.500" height="0.600" fill="#555"/><rect x="1.800" y="45.2" width="1.500" height="1.300" fill="#3b8ed8" opacity="0.800"/><rect x="3.800" y="45.5" width="3.500" height="0.600" fill="#555"/><rect x="1.800" y="47.8" width="1.500" height="1.300" fill="#8a8a8a" opacity="0.800"/><rect x="3.800" y="48.1" width="3.500" height="0.600" fill="#555"/><rect x="1.800" y="50.4" width="1.500" height="1.300" fill="#3b8ed8" opacity="0.800"/><rect x="3.800" y="50.7" width="3.500" height="0.600" fill="#555"/><path d="M10.9 10.4h2.2l0.6 0.7h2.4v3.100h-5.200z" fill="#e3b43a"/><rect x="10.9" y="11.7" width="5.200" height="2.500" rx="0.300" fill="#f3cf66"/><rect x="11.4" y="15.500" width="4" height="0.600" fill="#6d6d6d"/><path d="M17.4 10.4h2.2l0.6 0.7h2.4v3.100h-5.200z" fill="#e3b43a"/><rect x="17.4" y="11.7" width="5.200" height="2.500" rx="0.300" fill="#f3cf66"/><rect x="17.9" y="15.500" width="4" height="0.600" fill="#6d6d6d"/><path d="M23.9 10.4h2.2l0.6 0.7h2.4v3.100h-5.200z" fill="#e3b43a"/><rect x="23.9" y="11.7" width="5.200" height="2.500" rx="0.300" fill="#f3cf66"/><rect x="24.4" y="15.500" width="4" height="0.600" fill="#6d6d6d"/><path d="M30.4 10.4h2.2l0.6 0.7h2.4v3.100h-5.200z" fill="#e3b43a"/><rect x="30.4" y="11.7" width="5.200" height="2.500" rx="0.300" fill="#f3cf66"/><rect x="30.9" y="15.500" width="4" height="0.600" fill="#6d6d6d"/><path d="M36.9 10.4h2.2l0.6 0.7h2.4v3.100h-5.200z" fill="#e3b43a"/><rect x="36.9" y="11.7" width="5.200" height="2.500" rx="0.300" fill="#f3cf66"/><rect x="37.4" y="15.500" width="4" height="0.600" fill="#6d6d6d"/><path d="M43.4 10.4h2.2l0.6 0.7h2.4v3.100h-5.200z" fill="#e3b43a"/><rect x="43.4" y="11.7" width="5.200" height="2.500" rx="0.300" fill="#f3cf66"/><rect x="43.9" y="15.500" width="4" height="0.600" fill="#6d6d6d"/><path d="M49.9 10.4h2.2l0.6 0.7h2.4v3.100h-5.200z" fill="#e3b43a"/><rect x="49.9" y="11.7" width="5.200" height="2.500" rx="0.300" fill="#f3cf66"/><rect x="50.4" y="15.500" width="4" height="0.600" fill="#6d6d6d"/><path d="M56.4 10.4h2.2l0.6 0.7h2.4v3.100h-5.200z" fill="#e3b43a"/><rect x="56.4" y="11.7" width="5.200" height="2.500" rx="0.300" fill="#f3cf66"/><rect x="56.9" y="15.500" width="4" height="0.600" fill="#6d6d6d"/><path d="M62.9 10.4h2.2l0.6 0.7h2.4v3.100h-5.200z" fill="#e3b43a"/><rect x="62.9" y="11.7" width="5.200" height="2.500" rx="0.300" fill="#f3cf66"/><rect x="63.4" y="15.500" width="4" height="0.600" fill="#6d6d6d"/><path d="M69.4 10.4h2.2l0.6 0.7h2.4v3.100h-5.200z" fill="#e3b43a"/><rect x="69.4" y="11.7" width="5.200" height="2.500" rx="0.300" fill="#f3cf66"/><rect x="69.9" y="15.500" width="4" height="0.600" fill="#6d6d6d"/><path d="M75.9 10.4h2.2l0.6 0.7h2.4v3.100h-5.200z" fill="#e3b43a"/><rect x="75.9" y="11.7" width="5.200" height="2.500" rx="0.300" fill="#f3cf66"/><rect x="76.4" y="15.500" width="4" height="0.600" fill="#6d6d6d"/><path d="M82.4 10.4h2.2l0.6 0.7h2.4v3.100h-5.200z" fill="#e3b43a"/><rect x="82.4" y="11.7" width="5.200" height="2.500" rx="0.300" fill="#f3cf66"/><rect x="82.9" y="15.500" width="4" height="0.600" fill="#6d6d6d"/><path d="M10.9 18.699999999999996h2.2l0.6 0.7h2.4v3.100h-5.200z" fill="#e3b43a"/><rect x="10.9" y="19.999999999999996" width="5.200" height="2.500" rx="0.300" fill="#f3cf66"/><rect x="11.4" y="23.9" width="4" height="0.600" fill="#666"/><path d="M17.4 18.699999999999996h2.2l0.6 0.7h2.4v3.100h-5.200z" fill="#e3b43a"/><rect x="17.4" y="19.999999999999996" width="5.200" height="2.500" rx="0.300" fill="#f3cf66"/><rect x="17.9" y="23.9" width="4" height="0.600" fill="#666"/><path d="M23.9 18.699999999999996h2.2l0.6 0.7h2.4v3.100h-5.200z" fill="#e3b43a"/><rect x="23.9" y="19.999999999999996" width="5.200" height="2.500" rx="0.300" fill="#f3cf66"/><rect x="24.4" y="23.9" width="4" height="0.600" fill="#666"/><rect x="31.3" y="17.9" width="3.700" height="4.900" fill="#f4f4f4"/><rect x="30.9" y="23.9" width="4" height="0.600" fill="#666"/><rect x="37.8" y="17.9" width="3.700" height="4.900" fill="#f4f4f4"/><circle cx="39.6" cy="20.5" r="1.250" fill="#2d86d9"/><rect x="37.4" y="23.9" width="4" height="0.600" fill="#666"/><rect x="44.3" y="17.9" width="3.700" height="4.900" fill="#f4f4f4"/><circle cx="46.1" cy="20.5" r="1.250" fill="#2d86d9"/><rect x="43.9" y="23.9" width="4" height="0.600" fill="#666"/><rect x="50.8" y="17.9" width="3.700" height="4.900" fill="#f4f4f4"/><circle cx="52.6" cy="20.5" r="1.250" fill="#6b3d57"/><rect x="50.4" y="23.9" width="4" height="0.600" fill="#666"/><rect x="57.3" y="17.9" width="3.700" height="4.900" fill="#f4f4f4"/><circle cx="59.1" cy="20.5" r="1.250" fill="#2d86d9"/><rect x="56.9" y="23.9" width="4" height="0.600" fill="#666"/><rect x="63.8" y="17.9" width="3.700" height="4.900" fill="#f4f4f4"/><circle cx="65.6" cy="20.5" r="1.250" fill="#2d86d9"/><rect x="63.4" y="23.9" width="4" height="0.600" fill="#666"/><rect x="69.7" y="18.2" width="4.600" height="4.300" fill="#efefef"/><path d="M70.9 19.4L73.0 21.2" stroke="#555" stroke-width="0.600"/><rect x="69.9" y="23.9" width="4" height="0.600" fill="#666"/><rect x="76.8" y="17.9" width="3.700" height="4.900" fill="#f4f4f4"/><rect x="76.4" y="23.9" width="4" height="0.600" fill="#666"/><rect x="83.3" y="17.9" width="3.700" height="4.900" fill="#f4f4f4"/><rect x="82.9" y="23.9" width="4" height="0.600" fill="#666"/><rect x="11.8" y="27" width="3.700" height="4.900" fill="#f4f4f4"/><circle cx="13.6" cy="29.6" r="1.250" fill="#2d86d9"/><rect x="11.4" y="33" width="4" height="0.600" fill="#666"/><rect x="18.3" y="27" width="3.700" height="4.900" fill="#f4f4f4"/><circle cx="20.1" cy="29.6" r="1.250" fill="#6b3d57"/><rect x="17.9" y="33" width="4" height="0.600" fill="#666"/><rect x="24.8" y="27" width="3.700" height="4.900" fill="#f4f4f4"/><circle cx="26.6" cy="29.6" r="1.250" fill="#2d86d9"/><rect x="24.4" y="33" width="4" height="0.600" fill="#666"/><rect x="31.3" y="27" width="3.700" height="4.900" fill="#f4f4f4"/><rect x="30.9" y="33" width="4" height="0.600" fill="#666"/><rect x="37.8" y="27" width="3.700" height="4.900" fill="#f4f4f4"/><circle cx="39.6" cy="29.6" r="1.250" fill="#2d86d9"/><rect x="37.4" y="33" width="4" height="0.600" fill="#666"/><rect x="44.3" y="27" width="3.700" height="4.900" fill="#f4f4f4"/><circle cx="46.1" cy="29.6" r="1.250" fill="#2d86d9"/><rect x="43.9" y="33" width="4" height="0.600" fill="#666"/><rect x="50.8" y="27" width="3.700" height="4.900" fill="#f4f4f4"/><circle cx="52.6" cy="29.6" r="1.250" fill="#2d86d9"/><rect x="50.4" y="33" width="4" height="0.600" fill="#666"/><rect x="57.3" y="27" width="3.700" height="4.900" fill="#f4f4f4"/><circle cx="59.1" cy="29.6" r="1.250" fill="#2d86d9"/><rect x="56.9" y="33" width="4" height="0.600" fill="#666"/><rect x="63.8" y="27" width="3.700" height="4.900" fill="#f4f4f4"/><circle cx="65.6" cy="29.6" r="1.250" fill="#6b3d57"/><rect x="63.4" y="33" width="4" height="0.600" fill="#666"/><rect x="69.7" y="27.3" width="4.600" height="4.300" fill="#efefef"/><path d="M70.9 28.5L73.0 30.3" stroke="#555" stroke-width="0.600"/><rect x="69.9" y="33" width="4" height="0.600" fill="#666"/><rect x="76.2" y="27.3" width="4.600" height="4.300" fill="#efefef"/><path d="M77.4 28.5L79.5 30.3" stroke="#555" stroke-width="0.600"/><rect x="76.4" y="33" width="4" height="0.600" fill="#666"/><rect x="82.7" y="27.3" width="4.600" height="4.300" fill="#efefef"/><path d="M83.9 28.5L86.0 30.3" stroke="#555" stroke-width="0.600"/><rect x="82.9" y="33" width="4" height="0.600" fill="#666"/><rect x="11.4" y="35.8" width="4.600" height="4.300" fill="#efefef"/><path d="M12.6 37.0L14.7 38.8" stroke="#555" stroke-width="0.600"/><rect x="17.8" y="35.8" width="4.600" height="4.300" fill="#efefef"/><path d="M19.0 37.0L21.1 38.8" stroke="#555" stroke-width="0.600"/><rect x="10.200" y="34.500" width="6.800" height="10" fill="none" stroke="#c81e1e" stroke-width="0.600"/><rect x="17" y="34.500" width="7.600" height="10" fill="none" stroke="#1f9a3c" stroke-width="0.600"/><circle cx="10.200" cy="34.500" r="0.800" fill="#e02020"/><circle cx="24" cy="34.300" r="0.800" fill="#22b04a"/><rect x="29" y="36.600" width="11" height="3.800" fill="#050805"/><path d="M30 37.900H39M30 39.300H36" stroke="#1f9a3c" stroke-width="0.700"/><path d="M24.600 37.200H29" stroke="#1f9a3c" stroke-width="0.500"/><path d="M38.500 40.400L49.700 50.800" stroke="#1f9a3c" stroke-width="0.500"/><circle cx="49.700" cy="50.800" r="0.600" fill="#22b04a"/><rect x="51.300" y="50.200" width="17" height="4.400" fill="#0a0903"/><path d="M52.300 51.600H67M52.300 53.200H64" stroke="#b89b1a" stroke-width="0.700"/><path d="M13.600 44.500L13.200 52.400" stroke="#c81e1e" stroke-width="0.600"/><rect x="11.600" y="52.400" width="27.800" height="3.800" fill="#0a0303"/><path d="M12.500 53.700H38M12.500 55.100H17" stroke="#c81e1e" stroke-width="0.700"/><path d="M39.400 55L49.500 53" stroke="#c81e1e" stroke-width="0.600"/><rect x="68.700" y="26.300" width="19.600" height="8.700" fill="none" stroke="#2376c6" stroke-width="0.500"/><path d="M75.800 25.800V40.400" stroke="#2376c6" stroke-width="0.600"/><circle cx="75.800" cy="25.800" r="0.800" fill="#2d8be6"/><rect x="76.300" y="40.400" width="6.500" height="3.800" fill="#03070c"/><path d="M77 41.700H82M77 43.100H80" stroke="#2376c6" stroke-width="0.700"/><rect x="0.800" y="60" width="2.900" height="2.200" fill="#e9c04a"/><rect x="4.500" y="60.400" width="2" height="0.600" fill="#777"/></svg>
<div id="t45" class="lbl" style="left:232px;top:634.5px;font-size:13.3px;letter-spacing:0px"><span style="font-size:12px">（看这里）该目</span></div>
<div id="t46" class="lbl" style="left:232px;top:651.5px;font-size:13.3px;letter-spacing:0px"><span style="font-size:12px">录下的程序说明</span>.</div>
<div id="t47" class="lbl" style="left:232px;top:668.5px;font-size:13.3px;letter-spacing:0px">png</div>
<svg style="left:370px;top:545.7px" width="61.5" height="81.5" viewBox="0 0 61.5 81.5"><path d="M1 0.300H42.5L61.2 19V80.5A0.7 0.7 0 0 1 60.5 81.2H1A0.7 0.7 0 0 1 0.3 80.5V1A0.7 0.7 0 0 1 1 0.300Z" fill="#fbfbfb" stroke="#8f8b82" stroke-width="0.600"/><path d="M42.5 0.300L61.2 19H44.0A1.5 1.5 0 0 1 42.5 17.5Z" fill="#f3f3f3" stroke="#8f8b82" stroke-width="0.700" stroke-linejoin="round"/></svg>
<div id="t48" class="lbl" style="left:340.8px;top:634px;font-size:13.3px;letter-spacing:0.086px">.gitmodules</div>
<div class="abs" style="left:463px;top:539.800px;width:93px;height:93px;border:1px solid #4d4d4d;background:#191919"></div>
<svg style="left:473px;top:559px" width="71.500" height="54" viewBox="0 0 71.500 54"><defs><linearGradient id="pyb" x1="0" y1="0" x2="0.300" y2="1"><stop offset="0" stop-color="#1b90e4"/><stop offset="1" stop-color="#0a64bf"/></linearGradient></defs><rect width="71.500" height="54" rx="2.500" fill="#fafafa"/><path d="M0 2.500A2.500 2.500 0 0 1 2.500 0H69A2.500 2.500 0 0 1 71.500 2.500V2.800H0Z" fill="#8a8782"/><rect x="21.300" y="8" width="29.500" height="39.500" rx="1" fill="url(#pyb)"/><g stroke="#b9b9b9" stroke-width="0.900"><path d="M5 8.5H17"/><path d="M5 13.5H17"/><path d="M5 17.5H17"/><path d="M5 22.5H17"/><path d="M5 26.5H17"/><path d="M5 31.5H17"/><path d="M5 35.5H17"/><path d="M5 40.5H17"/><path d="M54.500 8.5H67"/><path d="M54.500 13.5H67"/><path d="M54.500 17.5H67"/><path d="M54.500 22.5H67"/><path d="M54.500 26.5H67"/></g></svg>
<div id="t49" class="lbl" style="left:450.4px;top:633.5px;font-size:13.3px;letter-spacing:-0.047px">api.py</div>
<svg style="left:587.5px;top:545.3px" width="62" height="82.5" viewBox="0 0 62 82.5"><defs><linearGradient id="wr16" x1="0.200" y1="0" x2="0.800" y2="1"><stop offset="0" stop-color="#f59243"/><stop offset="0.550" stop-color="#d7628a"/><stop offset="1" stop-color="#8e55c8"/></linearGradient><linearGradient id="wp16" x1="0" y1="0" x2="0" y2="1"><stop offset="0" stop-color="#ffffff"/><stop offset="1" stop-color="#eceef1"/></linearGradient><linearGradient id="wt16" x1="0" y1="0" x2="1" y2="0"><stop offset="0" stop-color="#ffffff"/><stop offset="1" stop-color="#c9c9c9"/></linearGradient></defs><path d="M1 0H43L62 19V81.5A1 1 0 0 1 61 82.5H1A1 1 0 0 1 0 81.5V1A1 1 0 0 1 1 0Z" fill="url(#wp16)"/><path d="M43 0L62 19H45A2 2 0 0 1 43 17Z" fill="#e4e6ea"/><circle cx="30.750" cy="42.200" r="22.500" fill="url(#wr16)"/><circle cx="30.750" cy="42.200" r="18.700" fill="#2b2b2b"/><path d="M24.500 32L40.700 42L24.500 52.500Z" fill="url(#wt16)"/></svg>
<div id="t50" class="lbl" style="left:559.4px;top:633.5px;font-size:13.3px;letter-spacing:-0.133px">audio1.wav</div>
<svg style="left:696.5px;top:545.3px" width="62" height="82.5" viewBox="0 0 62 82.5"><defs><linearGradient id="wr17" x1="0.200" y1="0" x2="0.800" y2="1"><stop offset="0" stop-color="#f59243"/><stop offset="0.550" stop-color="#d7628a"/><stop offset="1" stop-color="#8e55c8"/></linearGradient><linearGradient id="wp17" x1="0" y1="0" x2="0" y2="1"><stop offset="0" stop-color="#ffffff"/><stop offset="1" stop-color="#eceef1"/></linearGradient><linearGradient id="wt17" x1="0" y1="0" x2="1" y2="0"><stop offset="0" stop-color="#ffffff"/><stop offset="1" stop-color="#c9c9c9"/></linearGradient></defs><path d="M1 0H43L62 19V81.5A1 1 0 0 1 61 82.5H1A1 1 0 0 1 0 81.5V1A1 1 0 0 1 1 0Z" fill="url(#wp17)"/><path d="M43 0L62 19H45A2 2 0 0 1 43 17Z" fill="#e4e6ea"/><circle cx="30.750" cy="42.200" r="22.500" fill="url(#wr17)"/><circle cx="30.750" cy="42.200" r="18.700" fill="#2b2b2b"/><path d="M24.500 32L40.700 42L24.500 52.500Z" fill="url(#wt17)"/></svg>
<div id="t51" class="lbl" style="left:668.4px;top:633.5px;font-size:13.3px;letter-spacing:-0.133px">audio2.wav</div>
<div class="abs" style="left:0px;top:677.7px;width:1069px;height:22px;background:#1c1c1c;"></div>
<div class="abs" style="left:792.8px;top:142.7px;width:2.4px;height:263px;background:#9f9f9f;border-radius:1px"></div>
<div id="t52" class="t" style="left:911.5px;top:394.8px;font-size:12px;color:#fff;letter-spacing:0px;"><span style="font-size:12px">没有预览。</span></div>
<div id="t53" class="t" style="left:6px;top:681.5px;font-size:13px;color:#fff;letter-spacing:0.068px;">42 <span style="font-size:12px">个项目</span></div>
<div class="abs" style="left:70px;top:684px;width:1px;height:11px;background:#d0d0d0;"></div>
<div id="t54" class="t" style="left:81px;top:681.5px;font-size:13px;color:#fff;letter-spacing:0.062px;"><span style="font-size:12px">选中</span> 1 <span style="font-size:12px">个项目</span></div>
<div class="abs" style="left:166.5px;top:684px;width:1px;height:11px;background:#d0d0d0;"></div>
<svg style="left:1017.900px;top:680.800px" width="24.200" height="17.200" viewBox="0 0 24.200 17.200"><rect x="0" y="0" width="24.200" height="17.200" rx="2.800" fill="#b4b4b4"/><path d="M2.900 3.900H21.300M2.900 6.600H21.300M2.900 10.500H21.300M2.900 13.400H21.300" stroke="#0a0a0a" stroke-width="1.100"/></svg>
<svg style="left:1047.900px;top:680.800px" width="24.200" height="17.200" viewBox="0 0 24.200 17.200"><rect x="0" y="0" width="24.200" height="17.200" rx="2.800" fill="#b4b4b4"/><rect x="3.400" y="3" width="18" height="9.500" rx="1" fill="#fff" stroke="#0a0a0a" stroke-width="1.100"/><path d="M3 14.600H21.300" stroke="#0a0a0a" stroke-width="1.100"/></svg>
<div class="abs" style="left:0;top:0;width:1069px;height:130px;will-change:transform">
<div id="t1" class="t" style="left:35px;top:7.0px;font-size:12px;color:#fff;letter-spacing:-0.337px;-webkit-text-stroke:0.32px #fff">CosyVoice_win_v1.22</div>
<div id="t2" class="t" style="-webkit-text-stroke:0.22px currentColor;left:266px;top:45.5px;font-size:13.5px;color:#fff;letter-spacing:0px;"><span style="font-size:14px">此电脑</span></div>
<div id="t3" class="t" style="-webkit-text-stroke:0.22px currentColor;left:349.5px;top:45.5px;font-size:13.5px;color:#fff;letter-spacing:-0.125px;"><span style="font-size:14px">常玩高速盘</span> (D:)</div>
<div id="t4" class="t" style="-webkit-text-stroke:0.22px currentColor;left:485.5px;top:45.5px;font-size:13.5px;color:#fff;letter-spacing:0.206px;">AI-Workspace</div>
<div id="t5" class="t" style="-webkit-text-stroke:0.22px currentColor;left:612.5px;top:45.5px;font-size:13.5px;color:#fff;letter-spacing:-0.163px;">CosyVoice_win_v1.22</div>
<div id="t6" class="t" style="-webkit-text-stroke:0.22px currentColor;left:834px;top:45.5px;font-size:13.5px;color:#cdcdcd;letter-spacing:-0.204px;"><span style="font-size:14px">在</span> CosyVoice_win_v1.22 <span style="font-size:14px">中搜索</span></div>
<div id="t7" class="t" style="-webkit-text-stroke:0.22px currentColor;left:33.5px;top:96.0px;font-size:12px;color:#fff;letter-spacing:0px;"><span style="font-size:12px">新建</span></div>
<div id="t8" class="t" style="-webkit-text-stroke:0.22px currentColor;left:420.5px;top:96.0px;font-size:12px;color:#fff;letter-spacing:0px;"><span style="font-size:12px">排序</span></div>
<div id="t9" class="t" style="-webkit-text-stroke:0.22px currentColor;left:509.5px;top:96.0px;font-size:12px;color:#fff;letter-spacing:0px;"><span style="font-size:12px">查看</span></div>
<div id="t10" class="t" style="-webkit-text-stroke:0.22px currentColor;left:1033px;top:96.0px;font-size:12px;color:#fff;letter-spacing:0px;"><span style="font-size:12px">预览</span></div>
</div>
</body></html>
